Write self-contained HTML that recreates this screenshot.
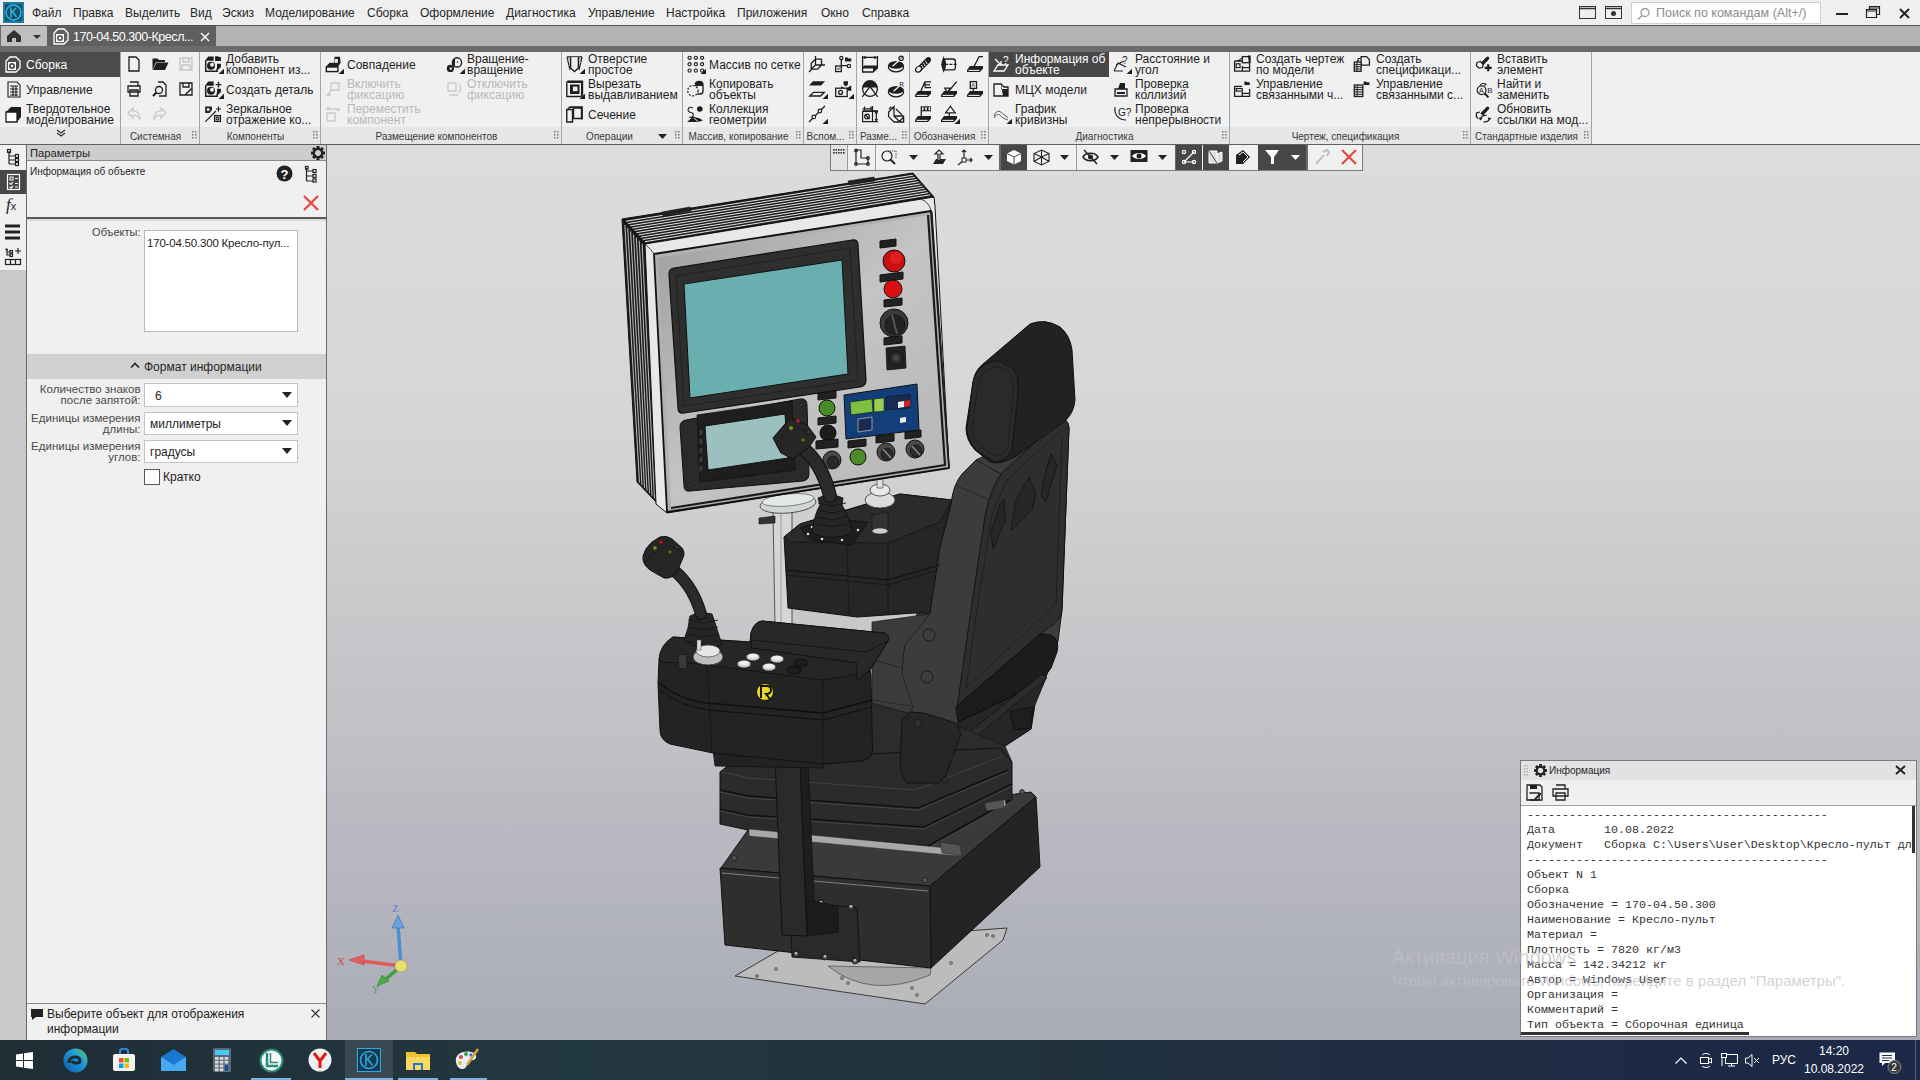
<!DOCTYPE html>
<html><head><meta charset="utf-8"><style>
*{margin:0;padding:0;box-sizing:border-box}
html,body{width:1920px;height:1080px;overflow:hidden;background:#f0f0f0;font-family:"Liberation Sans",sans-serif;color:#1e1e1e}
.a{position:absolute}
.t{position:absolute;white-space:nowrap;font-size:12px;line-height:11px;color:#1e1e1e}
.t2{position:absolute;white-space:nowrap;font-size:12px;line-height:11px;color:#1e1e1e}
.w{color:#fff}
.m{position:absolute;white-space:nowrap;font-size:12px;line-height:14px;top:6px;color:#262626}
.rl{position:absolute;white-space:nowrap;font-size:10px;line-height:12px;color:#3a3a3a;top:131px}
.dis{color:#b9b9b9}
svg{position:absolute;overflow:visible}
.mono{position:absolute;white-space:pre;font-family:"Liberation Mono",monospace;font-size:11.67px;line-height:15px;color:#333}
</style></head><body>
<div class="a" style="left:0;top:0;width:1920px;height:25px;background:#efefef"></div>
<svg width="21" height="21" style="left:3px;top:2px"><rect width="21" height="21" fill="#14506a"/><rect x="1" y="1" width="19" height="19" fill="none" stroke="#2aa6d6" stroke-width="1"/><circle cx="10.5" cy="10.5" r="7.5" fill="none" stroke="#2fb8e8" stroke-width="1.4"/><path d="M8 5.5 V15.5 M8 11 L13 6 M9.5 9.5 L13.5 15" fill="none" stroke="#2fb8e8" stroke-width="1.4"/></svg>
<div class="m" style="left:32px">Файл</div>
<div class="m" style="left:73px">Правка</div>
<div class="m" style="left:125px">Выделить</div>
<div class="m" style="left:190px">Вид</div>
<div class="m" style="left:222px">Эскиз</div>
<div class="m" style="left:265px">Моделирование</div>
<div class="m" style="left:367px">Сборка</div>
<div class="m" style="left:420px">Оформление</div>
<div class="m" style="left:506px">Диагностика</div>
<div class="m" style="left:588px">Управление</div>
<div class="m" style="left:666px">Настройка</div>
<div class="m" style="left:737px">Приложения</div>
<div class="m" style="left:821px">Окно</div>
<div class="m" style="left:862px">Справка</div>
<svg width="17" height="13" style="left:1579px;top:6px"><rect x="0.5" y="0.5" width="16" height="12" fill="none" stroke="#333"/><path d="M0.5 2.5 H16.5" stroke="#333" stroke-width="1.5"/></svg>
<svg width="17" height="13" style="left:1605px;top:6px"><rect x="0.5" y="0.5" width="16" height="12" fill="none" stroke="#333"/><path d="M0.5 2.5 H16.5" stroke="#333" stroke-width="1.5"/><circle cx="8.5" cy="7.5" r="2.5" fill="#333"/></svg>
<div class="a" style="left:1631px;top:2px;width:190px;height:22px;background:#fff;border:1px solid #cfcfcf"></div>
<svg width="14" height="14" style="left:1637px;top:7px"><circle cx="8" cy="5.5" r="4" fill="none" stroke="#999" stroke-width="1.3"/><path d="M5 8.5 L1 12.5" stroke="#999" stroke-width="1.5"/></svg>
<div class="m" style="left:1656px;color:#8c8c8c;font-size:12.5px">Поиск по командам (Alt+/)</div>
<div class="a" style="left:1836px;top:13px;width:12px;height:2px;background:#222"></div>
<svg width="15" height="13" style="left:1866px;top:6px"><path d="M3.5 3.5 V0.5 H13.5 V8.5 H10.5 M0.5 3.5 H10.5 V11.5 H0.5 Z M0.5 5 H10.5 M3.5 2 H13.5" fill="none" stroke="#222" stroke-width="1.2"/></svg>
<svg width="11" height="11" style="left:1899px;top:8px"><path d="M1 1 L10 10 M10 1 L1 10" stroke="#222" stroke-width="2"/></svg>
<div class="a" style="left:0;top:25px;width:1920px;height:27px;background:#6b6b6b;border-top:1px solid #525252"></div>
<div class="a" style="left:1px;top:26px;width:46px;height:20px;background:#bfbfbf"></div>
<svg width="14" height="12" style="left:7px;top:30px"><path d="M0 6 L7 0 L14 6 V12 H9 V8 H5 V12 H0 Z" fill="#333"/></svg>
<svg width="8" height="4" style="left:33px;top:35px"><path d="M0 0 H8 L4 4Z" fill="#333"/></svg>
<div class="a" style="left:47px;top:26px;width:169px;height:20px;background:#5f5f5f"></div>
<svg width="17" height="17" style="left:52px;top:28px"><path d="M2 5 L6 1 H12 L16 5 V12 L12 16 H2 Z" fill="none" stroke="#fff" stroke-width="1.3"/><rect x="4" y="6" width="8" height="8" fill="#fff"/><circle cx="8" cy="10" r="3" fill="#5f5f5f"/><circle cx="8" cy="10" r="1.2" fill="#fff"/></svg>
<div class="t" style="left:73px;top:31px;font-size:12.5px;line-height:13px;color:#fff;letter-spacing:-0.45px">170-04.50.300-Кресл...</div>
<svg width="10" height="10" style="left:200px;top:32px"><path d="M1 1 L9 9 M9 1 L1 9" stroke="#fff" stroke-width="1.4"/></svg>
<div class="a" style="left:216px;top:26px;width:1704px;height:20px;background:#b3b3b3"></div>
<div class="a" style="left:0;top:52px;width:1591px;height:92px;background:#f0f0f0"></div>
<div class="a" style="left:0;top:127px;width:1591px;height:17px;background:#e6e6e6"></div>
<div class="a" style="left:0;top:52px;width:120px;height:25px;background:#4b4b4b"></div>
<div class="a" style="left:989px;top:52px;width:120px;height:25px;background:#474747"></div>
<div class="a" style="left:120px;top:52px;width:1px;height:92px;background:#a4a4a4"></div>
<div class="a" style="left:199px;top:52px;width:1px;height:92px;background:#a4a4a4"></div>
<div class="a" style="left:320px;top:52px;width:1px;height:92px;background:#a4a4a4"></div>
<div class="a" style="left:561px;top:52px;width:1px;height:92px;background:#a4a4a4"></div>
<div class="a" style="left:682px;top:52px;width:1px;height:92px;background:#a4a4a4"></div>
<div class="a" style="left:803px;top:52px;width:1px;height:92px;background:#a4a4a4"></div>
<div class="a" style="left:856px;top:52px;width:1px;height:92px;background:#a4a4a4"></div>
<div class="a" style="left:909px;top:52px;width:1px;height:92px;background:#a4a4a4"></div>
<div class="a" style="left:988px;top:52px;width:1px;height:92px;background:#a4a4a4"></div>
<div class="a" style="left:1229px;top:52px;width:1px;height:92px;background:#a4a4a4"></div>
<div class="a" style="left:1470px;top:52px;width:1px;height:92px;background:#a4a4a4"></div>
<div class="a" style="left:1591px;top:52px;width:1px;height:92px;background:#a4a4a4"></div>
<div class="a" style="left:0;top:144px;width:1920px;height:1px;background:#5f5f5f"></div>
<div class="t w" style="left:26px;top:59.5px">Сборка</div>
<div class="t " style="left:26px;top:84.5px">Управление</div>
<div class="t2 " style="left:26px;top:103.7px">Твердотельное<br>моделирование</div>
<svg width="10" height="8" style="left:56px;top:129px"><path d="M1 1 L5 4 L9 1 M1 4 L5 7 L9 4" fill="none" stroke="#333" stroke-width="1.2"/></svg>
<svg width="17" height="17" style="left:4px;top:56px"><path d="M2 5 L6 1 H12 L16 5 V12 L12 16 H2 Z" fill="none" stroke="#fff" stroke-width="1.3"/><rect x="4" y="6" width="8" height="8" fill="#fff"/><circle cx="8" cy="10" r="3" fill="#4b4b4b"/><circle cx="8" cy="10" r="1.2" fill="#fff"/></svg>
<svg width="17" height="17" style="left:6px;top:81px"><path d="M2 1 H11 L14 4 V16 H2 Z M4 5 H12 M4 8 H12 M4 11 H12 M4 14 H12 M7 5 V15 M10 5 V15" fill="none" stroke="#1e1e1e" stroke-width="1.1"/></svg>
<svg width="17" height="17" style="left:5px;top:106px"><path d="M1 6 H12 V16 H1 Z" fill="#fff" stroke="#1e1e1e" stroke-width="1.3"/><path d="M1 6 L6 1 H16 V11 L12 16 V6 Z" fill="#1e1e1e"/></svg>
<svg class="ic" width="17" height="17" viewBox="0 0 17 17" style="left:126px;top:56px"><path d="M3 1 H10 L13 4 V15 H3 Z" fill="none" stroke="#1e1e1e" stroke-width="1.3"/></svg>
<svg class="ic" width="17" height="17" viewBox="0 0 17 17" style="left:152px;top:56px"><path d="M0.5 2.5 H5.5 L7 4 H13 V6 H4 L0.5 14 Z" fill="#1e1e1e"/><path d="M4.5 6.5 H16.5 L13 14 H0.8 Z" fill="#1e1e1e"/></svg>
<svg class="ic" width="17" height="17" viewBox="0 0 17 17" style="left:178px;top:56px"><path d="M2 2 H14 V14 H2 Z M5 2 V6 H11 V2 M4 9 H12 V14 H4 Z" fill="none" stroke="#c4c4c4" stroke-width="1.3"/></svg>
<svg class="ic" width="17" height="17" viewBox="0 0 17 17" style="left:126px;top:81px"><path d="M4 1 H12 V5 M2 5 H14 V11 H2 Z M4 9 H12 V15 H4 Z" fill="none" stroke="#1e1e1e" stroke-width="1.3"/></svg>
<svg class="ic" width="17" height="17" viewBox="0 0 17 17" style="left:152px;top:81px"><path d="M6 1 H11 L14 4 V15 H7" fill="none" stroke="#1e1e1e" stroke-width="1.3"/><circle cx="7" cy="9" r="3.5" fill="none" stroke="#1e1e1e" stroke-width="1.3"/><path d="M4.5 11.5 L1 15" stroke="#1e1e1e" stroke-width="2"/></svg>
<svg class="ic" width="17" height="17" viewBox="0 0 17 17" style="left:178px;top:81px"><path d="M2 2 H14 V14 H2 Z M5 2 V6 H11 V2" fill="none" stroke="#1e1e1e" stroke-width="1.3"/><path d="M7 13 L13 7 L14 8 L8 14 Z" fill="#1e1e1e"/></svg>
<svg class="ic" width="17" height="17" viewBox="0 0 17 17" style="left:126px;top:106px"><path d="M2 7 L7 2 V5 C12 5 14 8 14 13 C12 10 10 9 7 9 V12 Z" fill="none" stroke="#c4c4c4" stroke-width="1.2"/></svg>
<svg class="ic" width="17" height="17" viewBox="0 0 17 17" style="left:152px;top:106px"><path d="M14 7 L9 2 V5 C4 5 2 8 2 13 C4 10 6 9 9 9 V12 Z" fill="none" stroke="#c4c4c4" stroke-width="1.2"/></svg>
<svg class="ic" width="17" height="17" viewBox="0 0 17 17" style="left:205px;top:56px"><path d="M0.7 4.5 V15.2 H12.1 V12.5" fill="none" stroke="#1e1e1e" stroke-width="1.5"/><path d="M0 4.8 L3.2 0.5 H8.7 V4.8 Z M10.1 0.2 H13 L13.8 1 H15.9 V4.9 H10.1 Z M12 7.8 H15.9 V11 L13.5 13.5 H12 Z" fill="#1e1e1e"/><circle cx="6" cy="9.8" r="4" fill="#1e1e1e"/><circle cx="7" cy="8.8" r="2" fill="#f0f0f0"/><path d="M13.5 18 L19 18 L19 12.8 Z" fill="#1e1e1e"/></svg>
<div class="t2 " style="left:226px;top:53.7px">Добавить<br>компонент из...</div>
<svg class="ic" width="17" height="17" viewBox="0 0 17 17" style="left:205px;top:81px"><path d="M0.7 4.5 V15.2 H12.1 V12.5" fill="none" stroke="#1e1e1e" stroke-width="1.5"/><path d="M0 4.8 L3.2 0.5 H8.7 V4.8 Z M12 7.8 H15.9 V11 L13.5 13.5 H12 Z" fill="#1e1e1e"/><path d="M13.5 0.8 V6.6 M10.6 3.7 H16.4" stroke="#1e1e1e" stroke-width="1.3"/><circle cx="6" cy="9.8" r="4" fill="#1e1e1e"/><circle cx="7" cy="8.8" r="2" fill="#f0f0f0"/><path d="M13.5 18 L19 18 L19 12.8 Z" fill="#1e1e1e"/></svg>
<div class="t " style="left:226px;top:84.5px">Создать деталь</div>
<svg class="ic" width="17" height="17" viewBox="0 0 17 17" style="left:205px;top:106px"><path d="M0.2 0.5 H6.9 V4 L4.5 7 H0.2 Z" fill="#1e1e1e"/><circle cx="3.2" cy="3.6" r="1.5" fill="#f0f0f0"/><path d="M0.2 15.8 L11 5" stroke="#1e1e1e" stroke-width="1.1"/><path d="M13.5 0.5 V5.5 M11 3 H16" stroke="#1e1e1e" stroke-width="1.2"/><rect x="9.6" y="9.6" width="5.8" height="5.8" fill="#f0f0f0" stroke="#1e1e1e" stroke-width="1.3"/><circle cx="12.5" cy="12.5" r="1.4" fill="none" stroke="#1e1e1e" stroke-width="1.1"/></svg>
<div class="t2 " style="left:226px;top:103.7px">Зеркальное<br>отражение ко...</div>
<svg class="ic" width="17" height="17" viewBox="0 0 17 17" style="left:325px;top:56px"><rect x="1.3" y="11" width="11.6" height="4.6" fill="#f0f0f0" stroke="#1e1e1e" stroke-width="1.4"/><path d="M0.6 11 L4.5 6.8 H9.5 V0.8 H15 L15.6 6.8 L12.9 11 Z" fill="#1e1e1e"/><rect x="10" y="3" width="2.9" height="3.8" fill="#f0f0f0"/><path d="M13.5 18 L19 18 L19 12.8 Z" fill="#1e1e1e"/></svg>
<div class="t " style="left:347px;top:59.5px">Совпадение</div>
<svg class="ic" width="17" height="17" viewBox="0 0 17 17" style="left:325px;top:81px"><path d="M6 2 H14 V9 H6 Z M6 9 L3 14 M1 14 H6" fill="none" stroke="#c8c8c8" stroke-width="1.3"/></svg>
<div class="t2 dis" style="left:347px;top:78.7px">Включить<br>фиксацию</div>
<svg class="ic" width="17" height="17" viewBox="0 0 17 17" style="left:325px;top:106px"><path d="M1 3 H15 M1 3 L4 1 M15 3 L12 5 M2 7 H10 V15 H2 Z" fill="none" stroke="#c8c8c8" stroke-width="1.3"/></svg>
<div class="t2 dis" style="left:347px;top:103.7px">Переместить<br>компонент</div>
<svg class="ic" width="17" height="17" viewBox="0 0 17 17" style="left:446px;top:56px"><circle cx="11" cy="6.4" r="4.6" fill="#f0f0f0" stroke="#1e1e1e" stroke-width="1.4"/><path d="M6.4 6.4 A4.6 4.6 0 0 1 9 2.2 L9 10.6 A4.6 4.6 0 0 1 6.4 6.4 Z" fill="#1e1e1e"/><circle cx="11.5" cy="6" r="0.8" fill="#1e1e1e"/><circle cx="4.4" cy="12.4" r="3.6" fill="#1e1e1e"/><circle cx="4.8" cy="12.6" r="1.2" fill="#f0f0f0"/><path d="M13.5 18 L19 18 L19 12.8 Z" fill="#1e1e1e"/></svg>
<div class="t2 " style="left:467px;top:53.7px">Вращение-<br>вращение</div>
<svg class="ic" width="17" height="17" viewBox="0 0 17 17" style="left:446px;top:81px"><path d="M2 2 H10 V10 H2 Z M13 3 C15 6 15 9 13 12 M3 14 H12" fill="none" stroke="#c8c8c8" stroke-width="1.3"/></svg>
<div class="t2 dis" style="left:467px;top:78.7px">Отключить<br>фиксацию</div>
<svg class="ic" width="17" height="17" viewBox="0 0 17 17" style="left:566px;top:56px"><path d="M1 0.8 H16 M1 0.8 L4 14 M16 0.8 L13 14" stroke="#1e1e1e" stroke-width="1.2"/><path d="M1.5 2 L3.5 4 M1.5 5 L3.8 7.3 M2 8.5 L4.2 10.7 M2.7 11.8 L4.5 13.6 M13 2 L15.5 4.5 M13 5 L15 7 M12.8 8.3 L14.5 10 M12.5 11.5 L13.8 12.8" stroke="#888" stroke-width="1"/><path d="M4.6 1.2 V12 L8.5 15.5 L12.4 12 V1.2" fill="#f0f0f0" stroke="#1e1e1e" stroke-width="1.4"/><path d="M13.5 18 L19 18 L19 12.8 Z" fill="#1e1e1e"/></svg>
<div class="t2 " style="left:588px;top:53.7px">Отверстие<br>простое</div>
<svg class="ic" width="17" height="17" viewBox="0 0 17 17" style="left:566px;top:81px"><path d="M0.8 15.5 V1 L2 0.2 H16.5 V14 L15 15.5 Z" fill="#f0f0f0" stroke="#1e1e1e" stroke-width="1.4"/><path d="M2 0.2 H16.5 V14 L15 15.5 V2 H2 Z" fill="#1e1e1e"/><rect x="4" y="3.5" width="9.5" height="9.5" fill="#1e1e1e"/><rect x="6.9" y="5.6" width="4.6" height="4.6" fill="#f0f0f0"/><path d="M13.5 18 L19 18 L19 12.8 Z" fill="#1e1e1e"/></svg>
<div class="t2 " style="left:588px;top:78.7px">Вырезать<br>выдавливанием</div>
<svg class="ic" width="17" height="17" viewBox="0 0 17 17" style="left:566px;top:106px"><path d="M0.8 3.5 V16 H6.5 V3.5 Z" fill="#f0f0f0" stroke="#1e1e1e" stroke-width="1.4"/><path d="M7.5 2 H15.5 V12.5 H7.5 Z" fill="#f0f0f0" stroke="#1e1e1e" stroke-width="1.4"/><path d="M0.8 3.5 L3.5 0.3 H16.9 V13 L15.5 14 V2 H4 L2.5 3.5 Z" fill="#1e1e1e"/></svg>
<div class="t " style="left:588px;top:109.5px">Сечение</div>
<svg class="ic" width="17" height="17" viewBox="0 0 17 17" style="left:687px;top:56px"><circle cx="2.6" cy="1.8" r="1.6" fill="none" stroke="#1e1e1e" stroke-width="1.1"/><circle cx="2.6" cy="8.200000000000001" r="1.6" fill="none" stroke="#1e1e1e" stroke-width="1.1"/><circle cx="2.6" cy="14.600000000000001" r="1.6" fill="none" stroke="#1e1e1e" stroke-width="1.1"/><circle cx="8.85" cy="1.8" r="1.6" fill="none" stroke="#1e1e1e" stroke-width="1.1"/><circle cx="8.85" cy="8.200000000000001" r="1.6" fill="none" stroke="#1e1e1e" stroke-width="1.1"/><circle cx="8.85" cy="14.600000000000001" r="1.6" fill="none" stroke="#1e1e1e" stroke-width="1.1"/><circle cx="15.1" cy="1.8" r="1.6" fill="none" stroke="#1e1e1e" stroke-width="1.1"/><circle cx="15.1" cy="8.200000000000001" r="1.6" fill="none" stroke="#1e1e1e" stroke-width="1.1"/><circle cx="15.1" cy="14.600000000000001" r="1.6" fill="none" stroke="#1e1e1e" stroke-width="1.1"/><path d="M13.5 18 L19 18 L19 12.8 Z" fill="#1e1e1e"/></svg>
<div class="t " style="left:709px;top:59.5px">Массив по сетке</div>
<svg class="ic" width="17" height="17" viewBox="0 0 17 17" style="left:687px;top:81px"><circle cx="5.9" cy="9.7" r="5.2" fill="none" stroke="#1e1e1e" stroke-width="1.2" stroke-dasharray="2 1.4"/><path d="M8 3 Q9 0.3 12 0.3 Q16 0.3 16 3.5 V10 Q16 13 13 13 H10.5" fill="none" stroke="#1e1e1e" stroke-width="1.3"/><path d="M8 3 Q9 0.3 12 0.3 Q16 0.3 16 3.5 V5 H8 Z" fill="#1e1e1e"/></svg>
<div class="t2 " style="left:709px;top:78.7px">Копировать<br>объекты</div>
<svg class="ic" width="17" height="17" viewBox="0 0 17 17" style="left:687px;top:106px"><path d="M6 2 Q2 0 1.2 3 Q0.5 6 4 6.5 Q7 7 6 10 Q5 12 2 11" fill="none" stroke="#1e1e1e" stroke-width="1.1"/><circle cx="12.8" cy="3" r="2.8" fill="#1e1e1e"/><path d="M0.2 16 L6 10.5 L13 12.5 L16 14.5 L11 16 Z" fill="#1e1e1e"/><path d="M7 12 L11 15.5" stroke="#f0f0f0" stroke-width="1"/></svg>
<div class="t2 " style="left:709px;top:103.7px">Коллекция<br>геометрии</div>
<svg class="ic" width="17" height="17" viewBox="0 0 17 17" style="left:809px;top:56px"><path d="M6.5 0 V9 H16 M6.5 3.2 H12.5 V9 L8.7 13.1 H2.2 V7.3 L6.5 3.2 M2.2 13.1 L6.5 9 M0 16 L2.5 13.5" fill="none" stroke="#1e1e1e" stroke-width="1.3"/></svg>
<svg class="ic" width="17" height="17" viewBox="0 0 17 17" style="left:835px;top:56px"><path d="M6.3 3.5 V9.7 H12" fill="none" stroke="#1e1e1e" stroke-width="1.3"/><circle cx="6.3" cy="2" r="1.6" fill="#f0f0f0" stroke="#1e1e1e" stroke-width="1.2"/><circle cx="13.9" cy="10" r="1.7" fill="#f0f0f0" stroke="#1e1e1e" stroke-width="1.2"/><path d="M10 1.5 H12.5 L13.5 2.5 H16.3 V5.6 H10 Z" fill="#1e1e1e"/><rect x="0.7" y="10" width="5.6" height="5.6" fill="#f0f0f0" stroke="#1e1e1e" stroke-width="1.3"/><path d="M2.3 12.5 L3.3 13.8 L5 11.5" fill="none" stroke="#1e1e1e" stroke-width="1"/></svg>
<svg class="ic" width="17" height="17" viewBox="0 0 17 17" style="left:809px;top:81px"><path d="M0 4.6 L4 0.2 H16 L12 4.6 Z" fill="#1e1e1e"/><path d="M0.8 15 L4.5 11.3 H15.3 L11.6 15 Z" fill="none" stroke="#1e1e1e" stroke-width="1.3"/><path d="M13.5 18 L19 18 L19 12.8 Z" fill="#1e1e1e"/></svg>
<svg class="ic" width="17" height="17" viewBox="0 0 17 17" style="left:835px;top:81px"><rect x="0.7" y="7.2" width="11.5" height="8.3" fill="#f0f0f0" stroke="#1e1e1e" stroke-width="1.3"/><ellipse cx="5.6" cy="11.4" rx="1.9" ry="2" fill="none" stroke="#1e1e1e" stroke-width="1.3"/><path d="M8.5 0.3 H13 V3.5 L10.8 5.5 L8.5 3.5 Z M6 5.2 L10.8 7.8 L15.5 4.8 H16.3 V9.7 H12.3 V7 H6 Z" fill="#1e1e1e"/><path d="M13.5 18 L19 18 L19 12.8 Z" fill="#1e1e1e"/></svg>
<svg class="ic" width="17" height="17" viewBox="0 0 17 17" style="left:809px;top:106px"><path d="M0 16 L16 0" stroke="#1e1e1e" stroke-width="1.2"/><circle cx="4.8" cy="10.9" r="1.8" fill="#f0f0f0" stroke="#1e1e1e" stroke-width="1.2"/><circle cx="10.9" cy="5" r="1.8" fill="#f0f0f0" stroke="#1e1e1e" stroke-width="1.2"/><path d="M13.5 18 L19 18 L19 12.8 Z" fill="#1e1e1e"/></svg>
<svg class="ic" width="17" height="17" viewBox="0 0 17 17" style="left:862px;top:56px"><path d="M0.6 0 V16 H11 L15.4 12 V0 M0.6 1.4 H15.4 M3 0 V3 M12.8 0 V3" fill="none" stroke="#1e1e1e" stroke-width="1.3"/><path d="M2.5 9.5 H15.4 V12.2 L11 16 V12.6 H0.6 V11 Z" fill="#1e1e1e"/></svg>
<svg class="ic" width="17" height="17" viewBox="0 0 17 17" style="left:888px;top:56px"><ellipse cx="8" cy="11" rx="7.6" ry="4.8" fill="#f0f0f0" stroke="#1e1e1e" stroke-width="1.3"/><ellipse cx="8" cy="9" rx="7.6" ry="3.8" fill="#1e1e1e"/><path d="M4.5 10.3 L12.4 3.3" stroke="#f0f0f0" stroke-width="1.3"/><circle cx="13.1" cy="2.3" r="2.2" fill="#f0f0f0" stroke="#1e1e1e" stroke-width="1.2"/><path d="M12 3.4 L14.2 1.2" stroke="#1e1e1e" stroke-width="0.9"/></svg>
<svg class="ic" width="17" height="17" viewBox="0 0 17 17" style="left:862px;top:81px"><circle cx="8" cy="8" r="7.4" fill="none" stroke="#1e1e1e" stroke-width="1.3"/><path d="M0.6 6.5 A7.4 7.4 0 0 1 15.4 6.5 Z" fill="#1e1e1e"/><path d="M0.3 15.8 L8 5.5 L15.7 15.8" fill="none" stroke="#1e1e1e" stroke-width="1.3"/></svg>
<svg class="ic" width="17" height="17" viewBox="0 0 17 17" style="left:888px;top:81px"><ellipse cx="8" cy="11" rx="7.6" ry="4.8" fill="#f0f0f0" stroke="#1e1e1e" stroke-width="1.3"/><ellipse cx="8" cy="9" rx="7.6" ry="3.8" fill="#1e1e1e"/><path d="M5.5 10.3 L12 4.5" stroke="#f0f0f0" stroke-width="1.3"/><text x="11.2" y="5.6" font-size="6.5" fill="#1e1e1e" font-family="Liberation Sans">R</text></svg>
<svg class="ic" width="17" height="17" viewBox="0 0 17 17" style="left:862px;top:106px"><path d="M0.6 2.8 H10.5 M2.5 0.5 V4 M9 0.5 V4 M0.6 5 V15.6 H16 M10.5 0 V15.6 M14.3 6 V14.5 M13 7.2 L14.3 6 L15.6 7.2 M13 13.3 L14.3 14.5 L15.6 13.3" fill="none" stroke="#1e1e1e" stroke-width="1.2"/><rect x="0.6" y="4.2" width="15.4" height="1.8" fill="#1e1e1e"/><circle cx="5" cy="10.5" r="2.4" fill="none" stroke="#1e1e1e" stroke-width="1.2"/><path d="M3 8.5 L7.5 13" stroke="#1e1e1e" stroke-width="1.2"/></svg>
<svg class="ic" width="17" height="17" viewBox="0 0 17 17" style="left:888px;top:106px"><path d="M0.6 6 L6 0.6 V10 L11.5 15.5 L15.6 11 V16 H6 L0.6 10.6 Z M6 10 L15.6 10" fill="none" stroke="#1e1e1e" stroke-width="1.3"/><path d="M1 3 L3.5 0.8 M8 3 L14 9" stroke="#1e1e1e" stroke-width="1.2"/></svg>
<svg class="ic" width="17" height="17" viewBox="0 0 17 17" style="left:915px;top:56px"><path d="M1.5 12 L11 2.3 Q13.5 0 15.5 2 Q17 4 14.5 6.8 L5 16 Z" fill="#1e1e1e"/><ellipse cx="3.6" cy="13.2" rx="3.3" ry="2.6" transform="rotate(-45 3.6 13.2)" fill="#f0f0f0" stroke="#1e1e1e" stroke-width="1.2"/><path d="M6 9 Q8 10 8 12 M8 7 Q10 8 10 10 M10 5 Q12 6 12 8" fill="none" stroke="#f0f0f0" stroke-width="1"/></svg>
<svg class="ic" width="17" height="17" viewBox="0 0 17 17" style="left:941px;top:56px"><rect x="2.7" y="3" width="11.7" height="10.9" rx="2.5" fill="#f0f0f0" stroke="#1e1e1e" stroke-width="1.3"/><path d="M2.7 3.5 Q0.8 8.4 2.7 13.4 Q5 8.4 2.7 3.5 Z" fill="#1e1e1e" stroke="#1e1e1e" stroke-width="2.5"/><path d="M0 8.4 H16" stroke="#1e1e1e" stroke-width="1.2" stroke-dasharray="3 1.2"/></svg>
<svg class="ic" width="17" height="17" viewBox="0 0 17 17" style="left:967px;top:56px"><path d="M3 10 H16 V12.5 L13 16 H0 V14 Z" fill="#1e1e1e"/><path d="M1.5 14.4 H12.5" stroke="#f0f0f0" stroke-width="1.1"/><path d="M6 12.4 L12.1 0.6 H16" fill="none" stroke="#1e1e1e" stroke-width="1.2"/></svg>
<svg class="ic" width="17" height="17" viewBox="0 0 17 17" style="left:915px;top:81px"><path d="M3 10 H16 V12.5 L13 16 H0 V14 Z" fill="#1e1e1e"/><path d="M1.5 14.4 H12.5" stroke="#f0f0f0" stroke-width="1.1"/><path d="M5 12.4 L9.8 0.8 M10 0.8 H16 M10 3.8 H15 M10 6.6 H16 M10 0.8 V6.6" fill="none" stroke="#1e1e1e" stroke-width="1.3"/></svg>
<svg class="ic" width="17" height="17" viewBox="0 0 17 17" style="left:941px;top:81px"><path d="M3 10 H16 V12.5 L13 16 H0 V14 Z" fill="#1e1e1e"/><path d="M1.5 14.4 H12.5" stroke="#f0f0f0" stroke-width="1.1"/><path d="M3.8 7.2 H9.2 L6.5 11.5 Z M6.5 11.5 L15.8 0.6" fill="none" stroke="#1e1e1e" stroke-width="1.3"/></svg>
<svg class="ic" width="17" height="17" viewBox="0 0 17 17" style="left:967px;top:81px"><path d="M3 10 H16 V12.5 L13 16 H0 V14 Z" fill="#1e1e1e"/><path d="M1.5 14.4 H12.5" stroke="#f0f0f0" stroke-width="1.1"/><rect x="3.3" y="0.6" width="6.2" height="6.8" fill="#f0f0f0" stroke="#1e1e1e" stroke-width="1.3"/><path d="M6.3 7.4 V11" stroke="#1e1e1e" stroke-width="1.2"/><text x="4.3" y="6" font-size="5.5" fill="#1e1e1e" font-family="Liberation Sans">A</text></svg>
<svg class="ic" width="17" height="17" viewBox="0 0 17 17" style="left:915px;top:106px"><path d="M3 10 H16 V12.5 L13 16 H0 V14 Z" fill="#1e1e1e"/><path d="M1.5 14.4 H12.5" stroke="#f0f0f0" stroke-width="1.1"/><path d="M6.3 0.2 V11" stroke="#1e1e1e" stroke-width="1.3"/><rect x="6.3" y="0.3" width="9.6" height="5" fill="#1e1e1e"/><path d="M7.8 1.3 V4.3 M11 1.3 V4.3 M14.3 1.3 V4.3" stroke="#f0f0f0" stroke-width="1.6"/></svg>
<svg class="ic" width="17" height="17" viewBox="0 0 17 17" style="left:941px;top:106px"><path d="M3 10 H16 V12.5 L13 16 H0 V14 Z" fill="#1e1e1e"/><path d="M1.5 14.4 H12.5" stroke="#f0f0f0" stroke-width="1.1"/><path d="M4.6 6.9 L9.4 0.2 L14.2 6.9 Z M4 6.9 H14.8 M8.5 6.9 L8 11" fill="none" stroke="#1e1e1e" stroke-width="1.2"/><path d="M13.5 18 L19 18 L19 12.8 Z" fill="#1e1e1e"/></svg>
<svg class="ic" width="17" height="17" viewBox="0 0 17 17" style="left:993px;top:56px"><path d="M1 15 H11 L15 9 H5 Z M2 3 L8 9 M8 9 V5 M8 9 H4" fill="none" stroke="#fff" stroke-width="1.3"/><text x="10" y="8" font-size="10" fill="#fff" font-family="Liberation Sans">?</text></svg>
<div class="t2 w" style="left:1015px;top:53.7px">Информация об<br>объекте</div>
<svg class="ic" width="17" height="17" viewBox="0 0 17 17" style="left:993px;top:81px"><path d="M1 3 H8 L11 6 H15 V15 H1 Z" fill="none" stroke="#1e1e1e" stroke-width="1.3"/><path d="M8 3 V8 H15 V15 H10" fill="#1e1e1e"/></svg>
<div class="t " style="left:1015px;top:84.5px">МЦХ модели</div>
<svg class="ic" width="17" height="17" viewBox="0 0 17 17" style="left:993px;top:106px"><path d="M1 10 C4 2 8 6 10 8 C12 10 14 10 15 12 M1 12 C4 6 7 9 9 11 C11 13 13 13 15 14" fill="none" stroke="#555" stroke-width="1"/><path d="M13.5 18 L19 18 L19 12.8 Z" fill="#1e1e1e"/></svg>
<div class="t2 " style="left:1015px;top:103.7px">График<br>кривизны</div>
<svg class="ic" width="17" height="17" viewBox="0 0 17 17" style="left:1113px;top:56px"><path d="M1 15 L5 7 L13 11 M1 15 H10 M3 9 L11 5" fill="none" stroke="#1e1e1e" stroke-width="1.1"/><text x="9" y="8" font-size="10" fill="#1e1e1e" font-family="Liberation Sans">?</text><path d="M13.5 18 L19 18 L19 12.8 Z" fill="#1e1e1e"/></svg>
<div class="t2 " style="left:1135px;top:53.7px">Расстояние и<br>угол</div>
<svg class="ic" width="17" height="17" viewBox="0 0 17 17" style="left:1113px;top:81px"><path d="M2 8 H14 V15 H2 Z" fill="none" stroke="#1e1e1e" stroke-width="1.3"/><path d="M5 8 L7 2 H12 V8" fill="#1e1e1e"/><path d="M4 11 H12 V13 H4Z" fill="#1e1e1e"/></svg>
<div class="t2 " style="left:1135px;top:78.7px">Проверка<br>коллизий</div>
<svg class="ic" width="17" height="17" viewBox="0 0 17 17" style="left:1113px;top:106px"><path d="M2 1 C1 8 5 14 13 14" fill="none" stroke="#1e1e1e" stroke-width="1.1"/><text x="5" y="10" font-size="10" fill="#1e1e1e" font-family="Liberation Sans">G?</text></svg>
<div class="t2 " style="left:1135px;top:103.7px">Проверка<br>непрерывности</div>
<svg class="ic" width="17" height="17" viewBox="0 0 17 17" style="left:1234px;top:56px"><path d="M0.6 5 H8.3 M15.6 6.7 V15.2 H0.6 V5 M8.3 10 V15.2 M8.3 11.7 H15.6" fill="none" stroke="#1e1e1e" stroke-width="1.3"/><rect x="2.2" y="7.8" width="3.8" height="3.8" fill="none" stroke="#1e1e1e" stroke-width="1.2"/><rect x="8.3" y="0.6" width="7.3" height="6.1" fill="#f0f0f0" stroke="#1e1e1e" stroke-width="1.3"/><path d="M14 0.6 H15.6 V6.7" stroke="#1e1e1e" stroke-width="2"/><path d="M8 2.5 Q5.5 2.5 5 5 M4 3.8 L5 5.3 L6.3 4" fill="none" stroke="#1e1e1e" stroke-width="1"/></svg>
<div class="t2 " style="left:1256px;top:53.7px">Создать чертеж<br>по модели</div>
<svg class="ic" width="17" height="17" viewBox="0 0 17 17" style="left:1234px;top:81px"><path d="M0.6 5.3 H8 M15.6 8 V15.4 H0.6 V5.3 M8.3 10.8 V15.4 M8.3 12.4 H15.6" fill="none" stroke="#1e1e1e" stroke-width="1.3"/><rect x="2.2" y="7.5" width="6" height="2.6" fill="none" stroke="#1e1e1e" stroke-width="1.2"/><path d="M10.4 0.4 H12.5 L13.3 1.2 H15.8 V4.1 H10.4 Z" fill="#1e1e1e"/></svg>
<div class="t2 " style="left:1256px;top:78.7px">Управление<br>связанными ч...</div>
<svg class="ic" width="17" height="17" viewBox="0 0 17 17" style="left:1354px;top:56px"><path d="M7.1 0.6 H12.5 L15.4 3.5 V9.2 H7.1 Z" fill="#f0f0f0" stroke="#1e1e1e" stroke-width="1.3"/><rect x="0.3" y="6" width="6.8" height="9.3" fill="#f0f0f0" stroke="#1e1e1e" stroke-width="1.3"/><path d="M0.3 8.4 H7 M0.3 10.7 H7 M0.3 13 H7 M3 6 V15.3" stroke="#1e1e1e" stroke-width="1"/><path d="M6.5 2.5 H4 V5 M3 4 L4 5.3 L5 4" fill="none" stroke="#1e1e1e" stroke-width="1"/></svg>
<div class="t2 " style="left:1376px;top:53.7px">Создать<br>спецификаци...</div>
<svg class="ic" width="17" height="17" viewBox="0 0 17 17" style="left:1354px;top:81px"><rect x="0.3" y="4" width="8.5" height="11.5" fill="#f0f0f0" stroke="#1e1e1e" stroke-width="1.3"/><path d="M0.3 6.3 H8.8 M0.3 8.6 H8.8 M0.3 10.9 H8.8 M0.3 13.2 H8.8 M3.2 4 V15.5" stroke="#1e1e1e" stroke-width="1"/><path d="M9.6 0.4 H11.8 L12.6 1.2 H15.4 V4.1 H9.6 Z" fill="#1e1e1e"/></svg>
<div class="t2 " style="left:1376px;top:78.7px">Управление<br>связанными с...</div>
<svg class="ic" width="17" height="17" viewBox="0 0 17 17" style="left:1475px;top:56px"><path d="M5.3 7.5 L11.5 1 Q13 0 14 1.2 Q14.8 2.5 13.5 3.8 L8 9.5 Z" fill="#1e1e1e"/><path d="M2 6.5 L5.5 5.5 L8.2 8.5 L7.5 11.5 L4 12 L1.3 9.5 Z" fill="#f0f0f0" stroke="#1e1e1e" stroke-width="1.2"/><path d="M13.2 8.3 V15.3 M9.7 11.8 H16.7" stroke="#1e1e1e" stroke-width="2.2"/></svg>
<div class="t2 " style="left:1497px;top:53.7px">Вставить<br>элемент</div>
<svg class="ic" width="17" height="17" viewBox="0 0 17 17" style="left:1475px;top:81px"><circle cx="6.6" cy="9.3" r="4.4" fill="none" stroke="#1e1e1e" stroke-width="1.2"/><path d="M9.7 12.5 L13.5 16.4" stroke="#1e1e1e" stroke-width="2"/><text x="4" y="11.8" font-size="7" fill="#1e1e1e" font-family="Liberation Sans">A</text><text x="12.3" y="12.3" font-size="8" fill="#1e1e1e" font-family="Liberation Sans">B</text><path d="M5 3.8 Q8 0.8 11 3.5 M10 2.2 L11.3 3.8 L9.4 4.2" fill="none" stroke="#1e1e1e" stroke-width="1"/></svg>
<div class="t2 " style="left:1497px;top:78.7px">Найти и<br>заменить</div>
<svg class="ic" width="17" height="17" viewBox="0 0 17 17" style="left:1475px;top:106px"><path d="M5.3 7.5 L11.5 1 Q13 0 14 1.2 Q14.8 2.5 13.5 3.8 L8 9.5 Z" fill="#1e1e1e"/><path d="M5 6 L1.5 7 L1.3 10.5 L3 12.5" fill="none" stroke="#1e1e1e" stroke-width="1.2"/><path d="M5.5 13 Q7 8.5 11.5 9.5 M14.5 13 Q13 16.5 8.5 15.8 M4.2 11.8 L5.5 13.5 L7 12 M15.8 12 L14.5 13.2 L13.2 11.6" fill="none" stroke="#1e1e1e" stroke-width="1.3"/></svg>
<div class="t2 " style="left:1497px;top:103.7px">Обновить<br>ссылки на мод...</div>
<div class="rl" style="left:120px;width:71px;text-align:center">Системная</div>
<svg width="5" height="9" style="left:192px;top:131px"><rect x="0" y="0" width="1.5" height="1.5" fill="#777"/><rect x="0" y="3" width="1.5" height="1.5" fill="#777"/><rect x="0" y="6" width="1.5" height="1.5" fill="#777"/><rect x="3" y="0" width="1.5" height="1.5" fill="#777"/><rect x="3" y="3" width="1.5" height="1.5" fill="#777"/><rect x="3" y="6" width="1.5" height="1.5" fill="#777"/></svg>
<div class="rl" style="left:199px;width:113px;text-align:center">Компоненты</div>
<svg width="5" height="9" style="left:313px;top:131px"><rect x="0" y="0" width="1.5" height="1.5" fill="#777"/><rect x="0" y="3" width="1.5" height="1.5" fill="#777"/><rect x="0" y="6" width="1.5" height="1.5" fill="#777"/><rect x="3" y="0" width="1.5" height="1.5" fill="#777"/><rect x="3" y="3" width="1.5" height="1.5" fill="#777"/><rect x="3" y="6" width="1.5" height="1.5" fill="#777"/></svg>
<div class="rl" style="left:320px;width:233px;text-align:center">Размещение компонентов</div>
<svg width="5" height="9" style="left:554px;top:131px"><rect x="0" y="0" width="1.5" height="1.5" fill="#777"/><rect x="0" y="3" width="1.5" height="1.5" fill="#777"/><rect x="0" y="6" width="1.5" height="1.5" fill="#777"/><rect x="3" y="0" width="1.5" height="1.5" fill="#777"/><rect x="3" y="3" width="1.5" height="1.5" fill="#777"/><rect x="3" y="6" width="1.5" height="1.5" fill="#777"/></svg>
<div class="rl" style="left:561px;width:97px;text-align:center">Операции</div>
<svg width="5" height="9" style="left:675px;top:131px"><rect x="0" y="0" width="1.5" height="1.5" fill="#777"/><rect x="0" y="3" width="1.5" height="1.5" fill="#777"/><rect x="0" y="6" width="1.5" height="1.5" fill="#777"/><rect x="3" y="0" width="1.5" height="1.5" fill="#777"/><rect x="3" y="3" width="1.5" height="1.5" fill="#777"/><rect x="3" y="6" width="1.5" height="1.5" fill="#777"/></svg>
<div class="rl" style="left:682px;width:113px;text-align:center">Массив, копирование</div>
<svg width="5" height="9" style="left:796px;top:131px"><rect x="0" y="0" width="1.5" height="1.5" fill="#777"/><rect x="0" y="3" width="1.5" height="1.5" fill="#777"/><rect x="0" y="6" width="1.5" height="1.5" fill="#777"/><rect x="3" y="0" width="1.5" height="1.5" fill="#777"/><rect x="3" y="3" width="1.5" height="1.5" fill="#777"/><rect x="3" y="6" width="1.5" height="1.5" fill="#777"/></svg>
<div class="rl" style="left:803px;width:45px;text-align:center">Вспом...</div>
<svg width="5" height="9" style="left:849px;top:131px"><rect x="0" y="0" width="1.5" height="1.5" fill="#777"/><rect x="0" y="3" width="1.5" height="1.5" fill="#777"/><rect x="0" y="6" width="1.5" height="1.5" fill="#777"/><rect x="3" y="0" width="1.5" height="1.5" fill="#777"/><rect x="3" y="3" width="1.5" height="1.5" fill="#777"/><rect x="3" y="6" width="1.5" height="1.5" fill="#777"/></svg>
<div class="rl" style="left:856px;width:45px;text-align:center">Разме...</div>
<svg width="5" height="9" style="left:902px;top:131px"><rect x="0" y="0" width="1.5" height="1.5" fill="#777"/><rect x="0" y="3" width="1.5" height="1.5" fill="#777"/><rect x="0" y="6" width="1.5" height="1.5" fill="#777"/><rect x="3" y="0" width="1.5" height="1.5" fill="#777"/><rect x="3" y="3" width="1.5" height="1.5" fill="#777"/><rect x="3" y="6" width="1.5" height="1.5" fill="#777"/></svg>
<div class="rl" style="left:909px;width:71px;text-align:center">Обозначения</div>
<svg width="5" height="9" style="left:981px;top:131px"><rect x="0" y="0" width="1.5" height="1.5" fill="#777"/><rect x="0" y="3" width="1.5" height="1.5" fill="#777"/><rect x="0" y="6" width="1.5" height="1.5" fill="#777"/><rect x="3" y="0" width="1.5" height="1.5" fill="#777"/><rect x="3" y="3" width="1.5" height="1.5" fill="#777"/><rect x="3" y="6" width="1.5" height="1.5" fill="#777"/></svg>
<div class="rl" style="left:988px;width:233px;text-align:center">Диагностика</div>
<svg width="5" height="9" style="left:1222px;top:131px"><rect x="0" y="0" width="1.5" height="1.5" fill="#777"/><rect x="0" y="3" width="1.5" height="1.5" fill="#777"/><rect x="0" y="6" width="1.5" height="1.5" fill="#777"/><rect x="3" y="0" width="1.5" height="1.5" fill="#777"/><rect x="3" y="3" width="1.5" height="1.5" fill="#777"/><rect x="3" y="6" width="1.5" height="1.5" fill="#777"/></svg>
<div class="rl" style="left:1229px;width:233px;text-align:center">Чертеж, спецификация</div>
<svg width="5" height="9" style="left:1463px;top:131px"><rect x="0" y="0" width="1.5" height="1.5" fill="#777"/><rect x="0" y="3" width="1.5" height="1.5" fill="#777"/><rect x="0" y="6" width="1.5" height="1.5" fill="#777"/><rect x="3" y="0" width="1.5" height="1.5" fill="#777"/><rect x="3" y="3" width="1.5" height="1.5" fill="#777"/><rect x="3" y="6" width="1.5" height="1.5" fill="#777"/></svg>
<div class="rl" style="left:1470px;width:113px;text-align:center">Стандартные изделия</div>
<svg width="5" height="9" style="left:1584px;top:131px"><rect x="0" y="0" width="1.5" height="1.5" fill="#777"/><rect x="0" y="3" width="1.5" height="1.5" fill="#777"/><rect x="0" y="6" width="1.5" height="1.5" fill="#777"/><rect x="3" y="0" width="1.5" height="1.5" fill="#777"/><rect x="3" y="3" width="1.5" height="1.5" fill="#777"/><rect x="3" y="6" width="1.5" height="1.5" fill="#777"/></svg>
<svg width="9" height="5" style="left:658px;top:134px"><path d="M0 0 H9 L4.5 5Z" fill="#222"/></svg>
<div class="a" style="left:0;top:145px;width:26px;height:895px;background:#c9c9c9"></div>
<div class="a" style="left:0;top:145px;width:26px;height:125px;background:#f0f0f0"></div>
<div class="a" style="left:0;top:170px;width:26px;height:24px;background:#474747"></div>
<svg width="14" height="17" style="left:7px;top:149px"><path d="M2 2 V15 M2 7 H8 M2 11 H8 M2 15 H8" fill="none" stroke="#222" stroke-width="1.2"/><rect x="0.5" y="0.5" width="3" height="3" fill="none" stroke="#222" stroke-width="1.2"/><rect x="8.5" y="5.5" width="3" height="3" fill="none" stroke="#222" stroke-width="1.2"/><rect x="8.5" y="9.5" width="3" height="3" fill="none" stroke="#222" stroke-width="1.2"/><rect x="8.5" y="13.5" width="3" height="3" fill="none" stroke="#222" stroke-width="1.2"/></svg>
<svg width="14" height="17" style="left:7px;top:174px"><rect x="0.5" y="0.5" width="12" height="15" fill="none" stroke="#fff" stroke-width="1.2"/><rect x="3" y="3" width="3" height="3" fill="none" stroke="#fff"/><path d="M8 4.5 H11 M2.5 9 L4 10.5 L6 8 M8 9.5 H11 M2.5 13 L4 14 L6 12 M8 13 H11" fill="none" stroke="#fff" stroke-width="1.1"/></svg>
<div class="a" style="left:6px;top:196px;font-family:'Liberation Serif';font-style:italic;font-size:17px;line-height:18px;color:#222">f<span style="font-style:normal;font-family:'Liberation Sans';font-size:11px">x</span></div>
<svg width="16" height="16" style="left:5px;top:224px"><path d="M0 2 H15 M0 8 H15 M0 14 H15" stroke="#222" stroke-width="3"/></svg>
<svg width="17" height="17" style="left:5px;top:248px"><path d="M2 1 V7 H5 M2 4 H5" fill="none" stroke="#222" stroke-width="1.2"/><rect x="0.5" y="0.5" width="2" height="2" fill="#222"/><rect x="5" y="2.5" width="2.5" height="2.5" fill="none" stroke="#222" stroke-width="1.2"/><rect x="5" y="6" width="2.5" height="2.5" fill="none" stroke="#222" stroke-width="1.2"/><path d="M13 0 V6 M10 3 H16" fill="none" stroke="#222" stroke-width="1.2"/><rect x="0.5" y="11.5" width="15" height="5" fill="none" stroke="#222" stroke-width="1.2"/><path d="M5.5 11.5 V16.5 M10.5 11.5 V16.5" fill="none" stroke="#222" stroke-width="1.2"/></svg>
<div class="a" style="left:26px;top:145px;width:1px;height:895px;background:#6a6a6a"></div>
<div class="a" style="left:326px;top:145px;width:1px;height:895px;background:#6a6a6a"></div>
<div class="a" style="left:27px;top:145px;width:299px;height:858px;background:#f0f0f0"></div>
<div class="a" style="left:27px;top:145px;width:299px;height:16px;background:#cdcdcd;border-bottom:1px solid #8a8a8a"></div>
<div class="a" style="left:30px;top:146.1px;white-space:nowrap;font-size:11.25px;line-height:14px;color:#262626;">Параметры</div>
<svg width="14" height="14" style="left:311px;top:146px"><g transform="translate(7,7)"><rect x="-1.5" y="-7" width="3" height="4" fill="#222" transform="rotate(0)"/><rect x="-1.5" y="-7" width="3" height="4" fill="#222" transform="rotate(45)"/><rect x="-1.5" y="-7" width="3" height="4" fill="#222" transform="rotate(90)"/><rect x="-1.5" y="-7" width="3" height="4" fill="#222" transform="rotate(135)"/><rect x="-1.5" y="-7" width="3" height="4" fill="#222" transform="rotate(180)"/><rect x="-1.5" y="-7" width="3" height="4" fill="#222" transform="rotate(225)"/><rect x="-1.5" y="-7" width="3" height="4" fill="#222" transform="rotate(270)"/><rect x="-1.5" y="-7" width="3" height="4" fill="#222" transform="rotate(315)"/><circle r="4.2" fill="none" stroke="#222" stroke-width="2.2"/></g></svg>
<div class="a" style="left:30px;top:165.0px;white-space:nowrap;font-size:10px;line-height:14px;color:#262626;">Информация об объекте</div>
<svg width="17" height="17" style="left:276px;top:165px"><circle cx="8.5" cy="8.5" r="8" fill="#222"/><text x="4.5" y="13.5" font-size="13" font-weight="bold" fill="#fff" font-family="Liberation Sans">?</text></svg>
<svg width="12" height="16" style="left:305px;top:166px"><path d="M1.5 2 V15 M1.5 5 H8 M1.5 10 H8 M1.5 15 H8" fill="none" stroke="#222" stroke-width="1.2"/><rect x="0.5" y="0.5" width="2.5" height="2.5" fill="none" stroke="#222" stroke-width="1.2"/><rect x="8" y="3.5" width="3" height="3" fill="none" stroke="#222" stroke-width="1.2"/><rect x="8" y="8.5" width="3" height="3" fill="none" stroke="#222" stroke-width="1.2"/><rect x="8" y="13" width="3" height="3" fill="none" stroke="#222" stroke-width="1.2"/></svg>
<svg width="16" height="16" style="left:303px;top:195px"><path d="M1 1 L15 15 M15 1 L1 15" stroke="#e84545" stroke-width="2.2"/></svg>
<div class="a" style="left:27px;top:217px;width:299px;height:2px;background:#5a5a5a"></div>
<div class="a" style="left:27px;top:219px;width:299px;height:2px;background:#dadada"></div>
<div class="a" style="left:-59.5px;width:200px;top:224.7px;text-align:right;white-space:nowrap;font-size:11px;line-height:14px;color:#444;font-weight:normal">Объекты:</div>
<div class="a" style="left:144px;top:230px;width:154px;height:102px;background:#fff;border:1px solid #b9b9b9"></div>
<div class="a" style="left:147px;top:236.0px;white-space:nowrap;font-size:11.5px;line-height:14px;color:#1e1e1e;letter-spacing:-0.2px">170-04.50.300 Кресло-пул...</div>
<div class="a" style="left:27px;top:354px;width:299px;height:25px;background:#d0d0d0"></div>
<svg width="10" height="6" style="left:130px;top:362px"><path d="M1 5.5 L5 1.5 L9 5.5" fill="none" stroke="#222" stroke-width="1.6"/></svg>
<div class="a" style="left:144px;top:360.3px;white-space:nowrap;font-size:12px;line-height:14px;color:#262626;letter-spacing:0px">Формат информации</div>
<div class="a" style="left:144px;top:383px;width:154px;height:24px;background:#fff;border:1px solid #c3c3c3"></div>
<div class="a" style="left:155px;top:388.8px;white-space:nowrap;font-size:12px;line-height:14px;color:#1e1e1e;">6</div>
<svg width="10" height="6" style="left:282px;top:392px"><path d="M0 0 H10 L5 6Z" fill="#222"/></svg>
<div class="a" style="left:-59.5px;width:200px;top:381.5px;text-align:right;white-space:nowrap;font-size:11.5px;line-height:14px;color:#4a4a4a;font-weight:normal">Количество знаков</div>
<div class="a" style="left:-59.5px;width:200px;top:392.5px;text-align:right;white-space:nowrap;font-size:11.5px;line-height:14px;color:#4a4a4a;font-weight:normal">после запятой:</div>
<div class="a" style="left:144px;top:412px;width:154px;height:23px;background:#fff;border:1px solid #c3c3c3"></div>
<div class="a" style="left:150px;top:416.8px;white-space:nowrap;font-size:12px;line-height:14px;color:#1e1e1e;">миллиметры</div>
<svg width="10" height="6" style="left:282px;top:420px"><path d="M0 0 H10 L5 6Z" fill="#222"/></svg>
<div class="a" style="left:-59.5px;width:200px;top:410.5px;text-align:right;white-space:nowrap;font-size:11.5px;line-height:14px;color:#4a4a4a;font-weight:normal">Единицы измерения</div>
<div class="a" style="left:-59.5px;width:200px;top:421.5px;text-align:right;white-space:nowrap;font-size:11.5px;line-height:14px;color:#4a4a4a;font-weight:normal">длины:</div>
<div class="a" style="left:144px;top:440px;width:154px;height:23px;background:#fff;border:1px solid #c3c3c3"></div>
<div class="a" style="left:150px;top:444.8px;white-space:nowrap;font-size:12px;line-height:14px;color:#1e1e1e;">градусы</div>
<svg width="10" height="6" style="left:282px;top:448px"><path d="M0 0 H10 L5 6Z" fill="#222"/></svg>
<div class="a" style="left:-59.5px;width:200px;top:438.5px;text-align:right;white-space:nowrap;font-size:11.5px;line-height:14px;color:#4a4a4a;font-weight:normal">Единицы измерения</div>
<div class="a" style="left:-59.5px;width:200px;top:449.5px;text-align:right;white-space:nowrap;font-size:11.5px;line-height:14px;color:#4a4a4a;font-weight:normal">углов:</div>
<div class="a" style="left:144px;top:469px;width:16px;height:16px;background:#fff;border:1px solid #555"></div>
<div class="a" style="left:163px;top:469.8px;white-space:nowrap;font-size:12px;line-height:14px;color:#1e1e1e;">Кратко</div>
<div class="a" style="left:27px;top:1003px;width:299px;height:37px;background:#f0f0f0;border-top:1px solid #8c8c8c"></div>
<svg width="13" height="12" style="left:31px;top:1009px"><path d="M0 0 H12 V8 H5 L1 11 V8 H0Z" fill="#222"/></svg>
<div class="a" style="left:47px;top:1007.3px;white-space:nowrap;font-size:12px;line-height:14px;color:#1e1e1e;">Выберите объект для отображения</div>
<div class="a" style="left:47px;top:1022.3px;white-space:nowrap;font-size:12px;line-height:14px;color:#1e1e1e;">информации</div>
<svg width="9" height="9" style="left:311px;top:1009px"><path d="M0.5 0.5 L8.5 8.5 M8.5 0.5 L0.5 8.5" stroke="#333" stroke-width="1.1"/></svg>
<div class="a" style="left:327px;top:145px;width:1593px;height:895px;background:linear-gradient(180deg,#dcdcdc 0%,#d6d6d7 30%,#c4c4c8 60%,#a9abb7 100%)"></div>
<svg width="1920" height="1080" style="left:0;top:0" viewBox="0 0 1920 1080">
<defs><linearGradient id="panelg" x1="0" y1="0" x2="1" y2="1"><stop offset="0" stop-color="#9e9e9e"/><stop offset="0.5" stop-color="#c4c4c4"/><stop offset="1" stop-color="#b6b6b6"/></linearGradient></defs>
<polygon points="735,976 790,944 1007,928 1003,940 925,1004" fill="#bcbcbc" stroke="#3a3a3a" stroke-width="1" stroke-linejoin="round" />
<path d="M828 966 Q870 1000 930 975 L931 968 Z" fill="#a6a6a6" stroke="#555" stroke-width="0.8"/>
<circle cx="757" cy="976" r="1.6" fill="#888" stroke="#444" stroke-width="0.5"/>
<circle cx="776" cy="969" r="1.6" fill="#888" stroke="#444" stroke-width="0.5"/>
<circle cx="842" cy="978" r="1.6" fill="#888" stroke="#444" stroke-width="0.5"/>
<circle cx="848" cy="983" r="1.6" fill="#888" stroke="#444" stroke-width="0.5"/>
<circle cx="912" cy="988" r="1.6" fill="#888" stroke="#444" stroke-width="0.5"/>
<circle cx="917" cy="995" r="1.6" fill="#888" stroke="#444" stroke-width="0.5"/>
<circle cx="987" cy="935" r="1.6" fill="#888" stroke="#444" stroke-width="0.5"/>
<circle cx="951" cy="963" r="1.6" fill="#888" stroke="#444" stroke-width="0.5"/>
<circle cx="993" cy="936" r="1.6" fill="#888" stroke="#444" stroke-width="0.5"/>
<path d="M976 460 L1060 419 Q1068 418 1069 428 L1062 610 L1058 641 L1045 680 L1035 701 L1031 729 L1005 746 L960 770 L902 760 L900 720 L913 708 Q900 690 902 665 Q903 645 912 625 L928 590 L951 504 Q953 485 962 474 Z" fill="#3c3c3c" stroke="#111" stroke-width="1"/>
<path d="M1001 474 L1060 419 Q1068 418 1069 428 L1062 610 Q1060 622 1048 628 L957 708 L971 610 L985 516 Q990 490 1001 474 Z" fill="#2e2e2e" stroke="#111" stroke-width="0.9"/>
<polyline points="976,460 1001,474" fill="none" stroke="#111" stroke-width="0.8" stroke-linejoin="round" />
<polygon points="1006,481 1057,434 1062,438 1056,604 966,688 977,610 992,514" fill="none" stroke="#151515" stroke-width="0.6" stroke-linejoin="round" />
<polyline points="955,485 990,500" fill="none" stroke="#1a1a1a" stroke-width="0.6" stroke-linejoin="round" />
<polygon points="1051,454 1057,465 1046,502 1041,496 1044,477" fill="#262626" stroke="#111" stroke-width="0.7" stroke-linejoin="round" />
<polygon points="1029,477 1036,493 1032,510 1011,531 1015,504 1020,493" fill="#262626" stroke="#111" stroke-width="0.7" stroke-linejoin="round" />
<polygon points="1004,499 1005,521 993,549 991,532 1000,504" fill="#262626" stroke="#111" stroke-width="0.7" stroke-linejoin="round" />
<circle cx="929" cy="635" r="6" fill="none" stroke="#111" stroke-width="0.8"/>
<circle cx="927" cy="677" r="6" fill="none" stroke="#111" stroke-width="0.8"/>
<path d="M983 364 L1030 324 Q1045 318 1060 327 Q1070 335 1072 350 L1075 400 Q1074 412 1066 420 L1015 457 Q1000 465 990 462 L975 450 Q966 440 966 428 L973 382 Q975 370 983 364 Z" fill="#222" stroke="#111" stroke-width="1"/>
<path d="M982 367 Q990 360 1000 361 L1013 369 Q1019 375 1018 393 L1012 450 Q1008 460 995 462 L976 450 Q967 440 967 428 L973 382 Q975 372 982 367 Z" fill="#2a2a2a" stroke="#111" stroke-width="0.9"/>
<path d="M985 372 Q992 366 1000 367 L1010 373 Q1014 378 1013 393 L1008 447 Q1004 455 995 456 L980 446 Q972 438 972 428 L978 386 Q979 377 985 372 Z" fill="none" stroke="#151515" stroke-width="0.6"/>
<polygon points="872,622 930,614 904,646 902,673 913,708 900,720 872,724" fill="#3b3b3b" stroke="#1a1a1a" stroke-width="0.7" stroke-linejoin="round" />
<polyline points="873,660 902,668" fill="none" stroke="#1a1a1a" stroke-width="0.6" stroke-linejoin="round" />
<polyline points="873,700 910,706" fill="none" stroke="#1a1a1a" stroke-width="0.6" stroke-linejoin="round" />
<polygon points="958,722 1040,683 1046,678 1035,705 1031,729 1005,746 960,760" fill="#262626" stroke="#111" stroke-width="0.7" stroke-linejoin="round" />
<path d="M1040 634 L1051 635 Q1060 640 1057 652 L1051 668 L1040 683 L958 722 L956 707 Z" fill="#1c1c1c" stroke="#0e0e0e" stroke-width="1"/>
<polygon points="1042,674 1047,678 962,748 958,741" fill="#2c2c2c" stroke="#111" stroke-width="0.7" stroke-linejoin="round" />
<polygon points="1010,711 1033,707 1031,728 1014,730" fill="#1e1e1e" stroke="#0e0e0e" stroke-width="0.8" stroke-linejoin="round" />
<polygon points="860,700 960,727 1005,746 1012,762 1000,770 860,780" fill="#2c2c2c" stroke="#111" stroke-width="0.6" stroke-linejoin="round" />
<polygon points="721,868 748,830 1031,792 1036,797 930,886" fill="#3a3a3a" stroke="#111" stroke-width="1" stroke-linejoin="round" />
<polygon points="930,886 1036,797 1040,867 931,968" fill="#242424" stroke="#111" stroke-width="1" stroke-linejoin="round" />
<polygon points="720,868 930,886 931,968 725,945" fill="#2e2e2e" stroke="#111" stroke-width="1" stroke-linejoin="round" />
<polyline points="722,873 928,891" fill="none" stroke="#8a8a8a" stroke-width="0.9" stroke-linejoin="round" />
<polygon points="720,772 735,760 1000,748 1012,762 1012,800 958,830 928,846 748,830 720,824" fill="#2b2b2b" stroke="#111" stroke-width="1" stroke-linejoin="round" />
<polyline points="722,772 748,778 915,790 1003,756" fill="none" stroke="#454545" stroke-width="0.9" stroke-linejoin="round" />
<polyline points="720,790 748,796 918,808 1008,770" fill="none" stroke="#111" stroke-width="1.6" stroke-linejoin="round" />
<polyline points="720,792 748,798 918,810 1008,772" fill="none" stroke="#4a4a4a" stroke-width="0.9" stroke-linejoin="round" />
<polyline points="720,809 748,815 924,827 1012,784" fill="none" stroke="#111" stroke-width="1.6" stroke-linejoin="round" />
<polyline points="720,811 748,817 924,829 1012,786" fill="none" stroke="#4a4a4a" stroke-width="0.9" stroke-linejoin="round" />
<polyline points="748,830 928,846 1010,800" fill="none" stroke="#111" stroke-width="1.6" stroke-linejoin="round" />
<polyline points="748,832 928,848 1010,802" fill="none" stroke="#4a4a4a" stroke-width="0.9" stroke-linejoin="round" />
<polygon points="749,829 958,849 958,856 749,836" fill="#a8a8a8" stroke="#333" stroke-width="0.6" stroke-linejoin="round" />
<polygon points="985,803 1005,800 1006,806 986,809" fill="#a8a8a8" stroke="#333" stroke-width="0.5" stroke-linejoin="round" />
<polygon points="940,842 960,845 962,856 942,853" fill="#555" stroke="#222" stroke-width="0.5" stroke-linejoin="round" />
<polygon points="985,803 1003,800 1004,808 987,811" fill="#555" stroke="#222" stroke-width="0.5" stroke-linejoin="round" />
<circle cx="734" cy="858" r="2.5" fill="#555" stroke="#111" stroke-width="0.6"/>
<circle cx="925" cy="880" r="2.5" fill="#555" stroke="#111" stroke-width="0.6"/>
<circle cx="1022" cy="792" r="2.5" fill="#555" stroke="#111" stroke-width="0.6"/>
<polygon points="902,720 911,712 924,713 956,723 961,734 946,775 939,783 906,783 900,768" fill="#262626" stroke="#111" stroke-width="0.9" stroke-linejoin="round" />
<circle cx="918" cy="723" r="4" fill="#2e2e2e" stroke="#111" stroke-width="0.7"/>
<circle cx="945" cy="780" r="3" fill="#2e2e2e" stroke="#111" stroke-width="0.7"/>
<polygon points="773,512 792,510 792,625 775,625" fill="#d4d8d4" stroke="#333" stroke-width="0.8" stroke-linejoin="round" />
<polyline points="781,512 781,625" fill="none" stroke="#888" stroke-width="0.7" stroke-linejoin="round" />
<ellipse cx="788" cy="504" rx="28" ry="9" fill="#d2d6d2" stroke="#333" stroke-width="0.8" transform="rotate(-5 788 504)"/>
<ellipse cx="788" cy="500" rx="26" ry="6" fill="#e4e8e4" stroke="#444" stroke-width="0.6" transform="rotate(-5 788 500)"/>
<polygon points="759,518 775,516 775,523 759,524" fill="#333" stroke="#111" stroke-width="0.6" stroke-linejoin="round" />
<polygon points="784,537 800,524 900,494 952,500 940,547 930,613 915,613 857,617 788,608" fill="#262626" stroke="#111" stroke-width="1" stroke-linejoin="round" />
<polygon points="784,537 800,524 900,494 952,500 940,522 888,543 790,542" fill="#2b2b2b" stroke="#111" stroke-width="0.8" stroke-linejoin="round" />
<polyline points="786,570 888,580 940,565" fill="none" stroke="#111" stroke-width="1.2" stroke-linejoin="round" />
<polyline points="786,575 888,585 938,570" fill="none" stroke="#111" stroke-width="0.8" stroke-linejoin="round" />
<polyline points="888,543 888,615" fill="none" stroke="#111" stroke-width="0.8" stroke-linejoin="round" />
<polyline points="847,543 849,616" fill="none" stroke="#111" stroke-width="0.6" stroke-linejoin="round" />
<ellipse cx="880" cy="500" rx="15" ry="8" fill="#dcdcdc" stroke="#333" stroke-width="0.8" transform="rotate(0 880 500)"/>
<ellipse cx="880" cy="490" rx="10" ry="6" fill="#e8e8e8" stroke="#333" stroke-width="0.8" transform="rotate(0 880 490)"/>
<polygon points="877,478 883,478 883,488 877,488" fill="#ddd" stroke="#333" stroke-width="0.6" stroke-linejoin="round" />
<polygon points="872,515 888,512 888,530 872,532" fill="#333" stroke="#111" stroke-width="0.6" stroke-linejoin="round" />
<ellipse cx="880" cy="531" rx="8" ry="3" fill="#ccc" stroke="#333" stroke-width="0.6" transform="rotate(0 880 531)"/>
<polygon points="622,219 645,244 657,503 637,482" fill="#1c1c1c" stroke="#111" stroke-width="1" stroke-linejoin="round" />
<polyline points="624.875,225.125 639.5,482.625" fill="none" stroke="#cfcfcf" stroke-width="0.9" stroke-linejoin="round" />
<polyline points="627.75,228.25 642.0,485.25" fill="none" stroke="#cfcfcf" stroke-width="0.9" stroke-linejoin="round" />
<polyline points="630.625,231.375 644.5,487.875" fill="none" stroke="#cfcfcf" stroke-width="0.9" stroke-linejoin="round" />
<polyline points="633.5,234.5 647.0,490.5" fill="none" stroke="#cfcfcf" stroke-width="0.9" stroke-linejoin="round" />
<polyline points="636.375,237.625 649.5,493.125" fill="none" stroke="#cfcfcf" stroke-width="0.9" stroke-linejoin="round" />
<polyline points="639.25,240.75 652.0,495.75" fill="none" stroke="#cfcfcf" stroke-width="0.9" stroke-linejoin="round" />
<polyline points="642.125,243.875 654.5,498.375" fill="none" stroke="#cfcfcf" stroke-width="0.9" stroke-linejoin="round" />
<polygon points="622,219 913,173 934,197 645,244" fill="#1c1c1c" stroke="#111" stroke-width="1" stroke-linejoin="round" />
<polyline points="626.0909090909091,221.27272727272728 912.9090909090909,175.1818181818182" fill="none" stroke="#e6e6e6" stroke-width="1.0" stroke-linejoin="round" />
<polyline points="628.1818181818181,223.54545454545453 914.8181818181819,177.36363636363637" fill="none" stroke="#e6e6e6" stroke-width="1.0" stroke-linejoin="round" />
<polyline points="630.2727272727273,225.8181818181818 916.7272727272727,179.54545454545453" fill="none" stroke="#e6e6e6" stroke-width="1.0" stroke-linejoin="round" />
<polyline points="632.3636363636364,228.0909090909091 918.6363636363636,181.72727272727272" fill="none" stroke="#e6e6e6" stroke-width="1.0" stroke-linejoin="round" />
<polyline points="634.4545454545455,230.36363636363637 920.5454545454545,183.9090909090909" fill="none" stroke="#e6e6e6" stroke-width="1.0" stroke-linejoin="round" />
<polyline points="636.5454545454545,232.63636363636363 922.4545454545455,186.0909090909091" fill="none" stroke="#e6e6e6" stroke-width="1.0" stroke-linejoin="round" />
<polyline points="638.6363636363636,234.9090909090909 924.3636363636364,188.27272727272728" fill="none" stroke="#e6e6e6" stroke-width="1.0" stroke-linejoin="round" />
<polyline points="640.7272727272727,237.1818181818182 926.2727272727273,190.45454545454544" fill="none" stroke="#e6e6e6" stroke-width="1.0" stroke-linejoin="round" />
<polyline points="642.8181818181819,239.45454545454547 928.1818181818181,192.63636363636363" fill="none" stroke="#e6e6e6" stroke-width="1.0" stroke-linejoin="round" />
<polyline points="644.9090909090909,241.72727272727272 930.0909090909091,194.8181818181818" fill="none" stroke="#e6e6e6" stroke-width="1.0" stroke-linejoin="round" />
<polygon points="662,212 690,207 691,211 663,216" fill="#222" stroke="#111" stroke-width="0.6" stroke-linejoin="round" />
<polygon points="848,181 874,177 875,181 849,185" fill="#222" stroke="#111" stroke-width="0.6" stroke-linejoin="round" />
<polygon points="645,244 934,197 935,206 949,468 667,513 656,504" fill="#e8e8e8" stroke="#111" stroke-width="1" stroke-linejoin="round" />
<path d="M645 244 Q652 250 654 254" fill="none" stroke="#222" stroke-width="0.8"/>
<path d="M921 199 Q930 203 931 211" fill="none" stroke="#222" stroke-width="0.8"/>
<polygon points="654,254 931,211 949,468 667,512" fill="#b0b0b0" stroke="#111" stroke-width="1.8" stroke-linejoin="round" />
<polygon points="658,258 928,215 945,465 671,508" fill="url(#panelg)" stroke="none" stroke-width="0" stroke-linejoin="round" />
<polyline points="928,215 945,465 671,508" fill="none" stroke="#1a1a1a" stroke-width="2.2" stroke-linejoin="round" />
<polyline points="932,212 949,468" fill="none" stroke="#222" stroke-width="1.2" stroke-linejoin="round" />
<path d="M674 268 L852 240 Q858 239 858 245 L866 380 Q866 386 860 387 L684 413 Q678 414 678 408 L669 274 Q669 269 674 268 Z" fill="#2e2e2e" stroke="#111" stroke-width="1.2"/>
<polygon points="676,276 850,248 858,380 684,406" fill="none" stroke="#1a1a1a" stroke-width="0.7" stroke-linejoin="round" />
<polygon points="684,284 842,260 848,374 690,398" fill="#6aafb0" stroke="#111" stroke-width="1" stroke-linejoin="round" />
<path d="M686 420 L800 399 Q807 398 807 405 L809 474 Q809 480 803 481 L690 491 Q684 492 684 486 L680 427 Q680 421 686 420 Z" fill="#2a2a2a" stroke="#111" stroke-width="1"/>
<polygon points="697,415 792,401 795,470 700,482" fill="#1e1e1e" stroke="#111" stroke-width="0.8" stroke-linejoin="round" />
<polygon points="705,426 785,414 788,458 708,470" fill="#9cbfc0" stroke="#111" stroke-width="1" stroke-linejoin="round" />
<circle cx="686" cy="426" r="1.5" fill="#444" stroke="#111" stroke-width="0.5"/>
<circle cx="801" cy="405" r="1.5" fill="#444" stroke="#111" stroke-width="0.5"/>
<circle cx="804" cy="476" r="1.5" fill="#444" stroke="#111" stroke-width="0.5"/>
<circle cx="689" cy="485" r="1.5" fill="#444" stroke="#111" stroke-width="0.5"/>
<polygon points="699,430 703,429 703,435 699,436" fill="#3a3a3a" stroke="#111" stroke-width="0.5" stroke-linejoin="round" />
<polygon points="699,439 703,438 703,444 699,445" fill="#3a3a3a" stroke="#111" stroke-width="0.5" stroke-linejoin="round" />
<polygon points="699,448 703,447 703,453 699,454" fill="#3a3a3a" stroke="#111" stroke-width="0.5" stroke-linejoin="round" />
<polygon points="699,457 703,456 703,462 699,463" fill="#3a3a3a" stroke="#111" stroke-width="0.5" stroke-linejoin="round" />
<polygon points="699,466 703,465 703,471 699,472" fill="#3a3a3a" stroke="#111" stroke-width="0.5" stroke-linejoin="round" />
<text x="745" y="478" font-size="4" fill="#111" font-family="Liberation Sans" transform="rotate(-8 745 478)">TOPPY</text>
<polygon points="880,241 896,239 896,246 880,248" fill="#222" stroke="#111" stroke-width="1" stroke-linejoin="round" />
<circle cx="894" cy="261" r="11" fill="#c81010" stroke="#111" stroke-width="1"/>
<circle cx="896" cy="258" r="6" fill="#e02020" stroke="none" stroke-width="0"/>
<polygon points="880,275 903,272 903,279 880,282" fill="#222" stroke="#111" stroke-width="1" stroke-linejoin="round" />
<circle cx="893" cy="289" r="9" fill="#d81010" stroke="#111" stroke-width="1"/>
<polygon points="884,300 902,298 902,305 884,307" fill="#222" stroke="#111" stroke-width="1" stroke-linejoin="round" />
<circle cx="894" cy="323" r="14" fill="#3a3a3a" stroke="#111" stroke-width="1"/>
<circle cx="895" cy="325" r="10" fill="#222" stroke="#111" stroke-width="0.8"/>
<polyline points="892,315 897,334" fill="none" stroke="#555" stroke-width="2" stroke-linejoin="round" />
<polygon points="884,338 902,336 902,343 884,345" fill="#222" stroke="#111" stroke-width="1" stroke-linejoin="round" />
<polygon points="886,348 905,346 906,368 887,370" fill="#222" stroke="#111" stroke-width="0.8" stroke-linejoin="round" />
<circle cx="896" cy="358" r="7" fill="#2a2a2a" stroke="#111" stroke-width="0.8"/>
<circle cx="896" cy="358" r="4" fill="#444" stroke="#111" stroke-width="0.6"/>
<polygon points="844,395 917,384 919,430 846,439" fill="#123f7a" stroke="#111" stroke-width="1" stroke-linejoin="round" />
<polygon points="850,402 872,399 873,412 851,415" fill="#7ec040" stroke="#111" stroke-width="0.6" stroke-linejoin="round" />
<polygon points="874,399 884,398 884,411 874,412" fill="#9ccc50" stroke="#111" stroke-width="0.5" stroke-linejoin="round" />
<polygon points="886,397 910,394 910,408 886,410" fill="#1a2a50" stroke="#111" stroke-width="0.5" stroke-linejoin="round" />
<polygon points="898,402 904,401 904,407 898,408" fill="#eee" stroke="none" stroke-width="0" stroke-linejoin="round" />
<polygon points="904,401 910,400 910,406 904,407" fill="#c22" stroke="none" stroke-width="0" stroke-linejoin="round" />
<polygon points="858,419 872,417 872,430 858,432" fill="#1a2a50" stroke="#ddd" stroke-width="0.6" stroke-linejoin="round" />
<polygon points="900,418 906,417 906,422 900,423" fill="#eee" stroke="none" stroke-width="0" stroke-linejoin="round" />
<polygon points="818,393 836,391 836,398 818,400" fill="#222" stroke="#111" stroke-width="1" stroke-linejoin="round" />
<circle cx="827" cy="408" r="8" fill="#4a8a28" stroke="#111" stroke-width="1"/>
<polygon points="818,418 836,416 836,423 818,425" fill="#222" stroke="#111" stroke-width="1" stroke-linejoin="round" />
<circle cx="828" cy="433" r="8" fill="#1c1c1c" stroke="#111" stroke-width="1"/>
<polygon points="816,441 838,439 838,447 816,449" fill="#222" stroke="#111" stroke-width="1" stroke-linejoin="round" />
<circle cx="832" cy="460" r="9" fill="#4a4a4a" stroke="#111" stroke-width="1"/>
<circle cx="833" cy="462" r="6" fill="#2a2a2a" stroke="#111" stroke-width="0.7"/>
<polygon points="848,441 866,439 866,446 848,448" fill="#222" stroke="#111" stroke-width="1" stroke-linejoin="round" />
<circle cx="858" cy="457" r="8" fill="#4a8a28" stroke="#111" stroke-width="1"/>
<polygon points="876,436 894,434 894,441 876,443" fill="#222" stroke="#111" stroke-width="1" stroke-linejoin="round" />
<circle cx="886" cy="452" r="9" fill="#4a4a4a" stroke="#111" stroke-width="1"/>
<circle cx="887" cy="454" r="6" fill="#2a2a2a" stroke="#111" stroke-width="0.7"/>
<polyline points="883,449 891,458" fill="none" stroke="#888" stroke-width="1.5" stroke-linejoin="round" />
<polygon points="905,432 921,430 921,437 905,439" fill="#222" stroke="#111" stroke-width="1" stroke-linejoin="round" />
<circle cx="915" cy="449" r="9" fill="#4a4a4a" stroke="#111" stroke-width="1"/>
<circle cx="916" cy="451" r="6" fill="#2a2a2a" stroke="#111" stroke-width="0.7"/>
<polyline points="912,446 920,455" fill="none" stroke="#888" stroke-width="1.5" stroke-linejoin="round" />
<polygon points="800,528 830,518 868,522 852,545 810,540" fill="#1e1e1e" stroke="#0e0e0e" stroke-width="0.7" stroke-linejoin="round" />
<circle cx="808" cy="534" r="1.3" fill="#d8d8d8" stroke="none" stroke-width="0"/>
<circle cx="822" cy="539" r="1.3" fill="#d8d8d8" stroke="none" stroke-width="0"/>
<circle cx="842" cy="540" r="1.3" fill="#d8d8d8" stroke="none" stroke-width="0"/>
<circle cx="858" cy="530" r="1.3" fill="#d8d8d8" stroke="none" stroke-width="0"/>
<circle cx="812" cy="527" r="1.3" fill="#d8d8d8" stroke="none" stroke-width="0"/>
<path d="M812 533 Q814 515 820 505 L818 498 Q830 492 843 498 L842 505 Q849 516 852 533 Q832 542 812 533 Z" fill="#262626" stroke="#111" stroke-width="0.9"/>
<polyline points="818,503 832,506 846,503" fill="none" stroke="#131313" stroke-width="0.9" stroke-linejoin="round" />
<polyline points="818,510 832,513 846,510" fill="none" stroke="#131313" stroke-width="0.9" stroke-linejoin="round" />
<polyline points="818,517 832,520 846,517" fill="none" stroke="#131313" stroke-width="0.9" stroke-linejoin="round" />
<polyline points="818,524 832,527 846,524" fill="none" stroke="#131313" stroke-width="0.9" stroke-linejoin="round" />
<path d="M800 446 Q822 462 830 496" fill="none" stroke="#111" stroke-width="14" stroke-linecap="round"/>
<path d="M800 446 Q822 462 830 496" fill="none" stroke="#2a2a2a" stroke-width="12" stroke-linecap="round"/>
<polygon points="773,438 790,418 807,425 816,437 809,447 793,459 781,453" fill="#262626" stroke="#111" stroke-width="1" stroke-linejoin="round" />
<polyline points="781,453 776,444 792,425 809,432" fill="none" stroke="#151515" stroke-width="0.7" stroke-linejoin="round" />
<circle cx="798" cy="421" r="2.4" fill="#a22" stroke="#111" stroke-width="0.6"/>
<circle cx="791" cy="428" r="2.4" fill="#8a8a20" stroke="#111" stroke-width="0.6"/>
<circle cx="809" cy="432" r="2.4" fill="#333" stroke="#111" stroke-width="0.6"/>
<circle cx="803" cy="440" r="2.4" fill="#4a6a20" stroke="#111" stroke-width="0.6"/>
<polygon points="790,900 857,908 860,962 792,957" fill="#2a2a2a" stroke="#111" stroke-width="0.9" stroke-linejoin="round" />
<circle cx="821" cy="903" r="3" fill="#4a4a4a" stroke="#111" stroke-width="0.7"/>
<circle cx="821" cy="902.2" r="1.3" fill="#bbb" stroke="none" stroke-width="0"/>
<circle cx="851" cy="907" r="3" fill="#4a4a4a" stroke="#111" stroke-width="0.7"/>
<circle cx="851" cy="906.2" r="1.3" fill="#bbb" stroke="none" stroke-width="0"/>
<circle cx="796" cy="954" r="3" fill="#4a4a4a" stroke="#111" stroke-width="0.7"/>
<circle cx="796" cy="953.2" r="1.3" fill="#bbb" stroke="none" stroke-width="0"/>
<circle cx="825" cy="957" r="3" fill="#4a4a4a" stroke="#111" stroke-width="0.7"/>
<circle cx="825" cy="956.2" r="1.3" fill="#bbb" stroke="none" stroke-width="0"/>
<circle cx="855" cy="961" r="3" fill="#4a4a4a" stroke="#111" stroke-width="0.7"/>
<circle cx="855" cy="960.2" r="1.3" fill="#bbb" stroke="none" stroke-width="0"/>
<polygon points="775,755 800,760 807,936 782,935" fill="#2a2a2a" stroke="#111" stroke-width="1" stroke-linejoin="round" />
<polygon points="800,760 808,762 815,920 807,936" fill="#1e1e1e" stroke="#111" stroke-width="0.8" stroke-linejoin="round" />
<polygon points="807,900 838,906 838,932 807,936" fill="#1c1c1c" stroke="#111" stroke-width="0.8" stroke-linejoin="round" />
<polygon points="713,750 715,766 823,768 823,755" fill="#222" stroke="#111" stroke-width="0.8" stroke-linejoin="round" />
<path d="M659 660 Q660 645 673 637 L750 642 L751 633 Q754 622 762 621 L884 633 Q891 636 888 641 L870 670 L871 675 L872.5 752 Q870 760 861 761 L823 764 L713 753 L670 744 Q660 740 660 730 L658 683 Z" fill="#232323" stroke="#111" stroke-width="1"/>
<path d="M659 660 Q660 645 673 637 L750 642 L856 652 L870 672 L823 680 L690 663 L662 662 Z" fill="#262626" stroke="#111" stroke-width="0.8"/>
<path d="M751 633 Q754 622 762 621 L884 633 Q891 636 888 641 L870 670 L857 681 L857 663 L751 648 Z" fill="#282828" stroke="#111" stroke-width="0.9"/>
<polyline points="752,640 866,652 888,641" fill="none" stroke="#111" stroke-width="0.8" stroke-linejoin="round" />
<path d="M659 683 Q680 700 707 703 L823 713 L872 700" fill="none" stroke="#0e0e0e" stroke-width="1.4"/>
<path d="M660 690 Q682 707 709 710 L823 720 L872 707" fill="none" stroke="#0e0e0e" stroke-width="1"/>
<polyline points="823,680 823,763" fill="none" stroke="#111" stroke-width="0.7" stroke-linejoin="round" />
<polyline points="707,663 712,752" fill="none" stroke="#111" stroke-width="0.7" stroke-linejoin="round" />
<circle cx="765" cy="692" r="8.5" fill="#e8d820" stroke="#111" stroke-width="1"/>
<path d="M761 698 V686 H767 Q771 686 771 690 Q771 694 766 694 L770 699" fill="none" stroke="#111" stroke-width="2"/>
<ellipse cx="753" cy="657" rx="7" ry="4" fill="#cfcfcf" stroke="#222" stroke-width="0.9" transform="rotate(0 753 657)"/>
<ellipse cx="753" cy="656" rx="4.5" ry="2.2" fill="#f0f0f0" stroke="none" stroke-width="0" transform="rotate(0 753 656)"/>
<ellipse cx="777" cy="659" rx="7" ry="4" fill="#cfcfcf" stroke="#222" stroke-width="0.9" transform="rotate(0 777 659)"/>
<ellipse cx="777" cy="658" rx="4.5" ry="2.2" fill="#f0f0f0" stroke="none" stroke-width="0" transform="rotate(0 777 658)"/>
<ellipse cx="744" cy="664" rx="7" ry="4" fill="#cfcfcf" stroke="#222" stroke-width="0.9" transform="rotate(0 744 664)"/>
<ellipse cx="744" cy="663" rx="4.5" ry="2.2" fill="#f0f0f0" stroke="none" stroke-width="0" transform="rotate(0 744 663)"/>
<ellipse cx="769" cy="667" rx="7" ry="4" fill="#cfcfcf" stroke="#222" stroke-width="0.9" transform="rotate(0 769 667)"/>
<ellipse cx="769" cy="666" rx="4.5" ry="2.2" fill="#f0f0f0" stroke="none" stroke-width="0" transform="rotate(0 769 666)"/>
<ellipse cx="801" cy="663" rx="7" ry="4" fill="#1c1c1c" stroke="#0c0c0c" stroke-width="0.8" transform="rotate(0 801 663)"/>
<ellipse cx="794" cy="670" rx="7" ry="4" fill="#1c1c1c" stroke="#0c0c0c" stroke-width="0.8" transform="rotate(0 794 670)"/>
<polygon points="678,655 686,654 687,668 679,669" fill="#3a3a3a" stroke="#111" stroke-width="0.6" stroke-linejoin="round" />
<polygon points="684,640 688,628 690,616 700,612 712,614 716,626 722,645 704,650" fill="#262626" stroke="#111" stroke-width="0.9" stroke-linejoin="round" />
<polyline points="688,620 704,623 718,620" fill="none" stroke="#151515" stroke-width="0.8" stroke-linejoin="round" />
<polyline points="688,627 704,630 718,627" fill="none" stroke="#151515" stroke-width="0.8" stroke-linejoin="round" />
<polyline points="688,634 704,637 718,634" fill="none" stroke="#151515" stroke-width="0.8" stroke-linejoin="round" />
<polyline points="688,641 704,644 718,641" fill="none" stroke="#151515" stroke-width="0.8" stroke-linejoin="round" />
<path d="M668 566 Q692 582 701 614" fill="none" stroke="#111" stroke-width="12" stroke-linecap="round"/>
<path d="M668 566 Q692 582 701 614" fill="none" stroke="#2a2a2a" stroke-width="10" stroke-linecap="round"/>
<path d="M643 556 Q645 548 652 542 L660 537 Q667 535 672 539 L682 548 Q686 553 682 560 L677 572 Q672 579 664 578 L650 570 Q642 564 643 556 Z" fill="#262626" stroke="#111" stroke-width="1"/>
<polyline points="645,563 650,556 668,545 683,552" fill="none" stroke="#141414" stroke-width="0.7" stroke-linejoin="round" />
<circle cx="661" cy="542" r="2.2" fill="#a22" stroke="#111" stroke-width="0.6"/>
<circle cx="655" cy="548" r="2.2" fill="#8a8a20" stroke="#111" stroke-width="0.6"/>
<circle cx="670" cy="552" r="2.2" fill="#4a6a20" stroke="#111" stroke-width="0.6"/>
<circle cx="677" cy="547" r="2.2" fill="#333" stroke="#111" stroke-width="0.6"/>
<ellipse cx="708" cy="657" rx="15" ry="8" fill="#bfbfbf" stroke="#333" stroke-width="0.8" transform="rotate(0 708 657)"/>
<ellipse cx="708" cy="651" rx="12" ry="6" fill="#e6e6e6" stroke="#444" stroke-width="0.7" transform="rotate(0 708 651)"/>
<polygon points="697,640 701,640 701,650 697,650" fill="#ddd" stroke="#444" stroke-width="0.5" stroke-linejoin="round" />
</svg>
<div class="a" style="left:830px;top:145px;width:533px;height:26px;background:#f0f0f0;border:1px solid #7a7a7a;border-top:none"></div>
<div class="a" style="left:847px;top:145px;width:1px;height:25px;background:#9a9a9a"></div>
<div class="a" style="left:875px;top:145px;width:1px;height:25px;background:#9a9a9a"></div>
<div class="a" style="left:1076px;top:145px;width:1px;height:25px;background:#9a9a9a"></div>
<div class="a" style="left:999px;top:145px;width:2px;height:25px;background:#6a6a6a"></div>
<div class="a" style="left:1175px;top:145px;width:2px;height:25px;background:#6a6a6a"></div>
<div class="a" style="left:1306px;top:145px;width:2px;height:25px;background:#6a6a6a"></div>
<div class="a" style="left:831px;top:145px;width:16px;height:25px;background:#e4e4e4"></div>
<div class="a" style="left:1001px;top:145px;width:26px;height:25px;background:#474747"></div>
<div class="a" style="left:1176px;top:145px;width:26px;height:25px;background:#474747"></div>
<div class="a" style="left:1203px;top:145px;width:26px;height:25px;background:#474747"></div>
<div class="a" style="left:1258px;top:145px;width:48px;height:25px;background:#474747"></div>
<svg width="12" height="6" style="left:833px;top:149px"><rect x="0.0" y="0" width="1.6" height="1.6" fill="#333"/><rect x="0.0" y="3" width="1.6" height="1.6" fill="#333"/><rect x="2.5" y="0" width="1.6" height="1.6" fill="#333"/><rect x="2.5" y="3" width="1.6" height="1.6" fill="#333"/><rect x="5.0" y="0" width="1.6" height="1.6" fill="#333"/><rect x="5.0" y="3" width="1.6" height="1.6" fill="#333"/><rect x="7.5" y="0" width="1.6" height="1.6" fill="#333"/><rect x="7.5" y="3" width="1.6" height="1.6" fill="#333"/><rect x="10.0" y="0" width="1.6" height="1.6" fill="#333"/><rect x="10.0" y="3" width="1.6" height="1.6" fill="#333"/></svg>
<svg width="16" height="16" style="left:854px;top:149px"><path d="M2 1 V15 H14 V9 H7 V1 Z" fill="none" stroke="#222" stroke-width="1.2"/><circle cx="2" cy="1.5" r="1.3" fill="none" stroke="#222" stroke-width="1.2"/><circle cx="2" cy="15" r="1.3" fill="none" stroke="#222" stroke-width="1.2"/><circle cx="14" cy="15" r="1.3" fill="none" stroke="#222" stroke-width="1.2"/><circle cx="14" cy="9" r="1.3" fill="none" stroke="#222" stroke-width="1.2"/></svg>
<svg width="16" height="16" style="left:881px;top:149px"><circle cx="6" cy="7" r="5" fill="none" stroke="#222" stroke-width="1.2"/><path d="M9.5 10.5 L14 15" stroke="#222" stroke-width="2"/><path d="M7 2 H15 V9" fill="none" stroke="#333" stroke-dasharray="1 1"/></svg>
<svg width="9" height="5" style="left:909px;top:155px"><path d="M0 0 H9 L4.5 5Z" fill="#222"/></svg>
<svg width="9" height="5" style="left:984px;top:155px"><path d="M0 0 H9 L4.5 5Z" fill="#222"/></svg>
<svg width="9" height="5" style="left:1060px;top:155px"><path d="M0 0 H9 L4.5 5Z" fill="#222"/></svg>
<svg width="9" height="5" style="left:1110px;top:155px"><path d="M0 0 H9 L4.5 5Z" fill="#222"/></svg>
<svg width="9" height="5" style="left:1158px;top:155px"><path d="M0 0 H9 L4.5 5Z" fill="#222"/></svg>
<svg width="16" height="16" style="left:930px;top:149px"><path d="M3 15 L6 10 H16 L13 15 Z" fill="#222"/><path d="M8 11 V5 H5 L9 1 L13 5 H10 V11" fill="#fff" stroke="#222" stroke-width="1.2"/></svg>
<svg width="17" height="17" style="left:956px;top:149px"><path d="M8 11 V1 M8 11 H16 M8 11 L2 16 M6 3 L8 1 L10 3 M14 9 L16 11 L14 13" fill="none" stroke="#222" stroke-width="1.2"/><rect x="6" y="9" width="4" height="4" fill="#fff" stroke="#222"/></svg>
<svg width="16" height="16" style="left:1006px;top:149px"><path d="M8 1 L15 4.5 V12 L8 15.5 L1 12 V4.5 Z" fill="#fff"/><path d="M1 4.5 L8 8 L15 4.5 M8 8 V15.5" fill="none" stroke="#474747" stroke-width="1"/></svg>
<svg width="17" height="17" style="left:1033px;top:149px"><path d="M8.5 1 L16 4.5 V12.5 L8.5 16 L1 12.5 V4.5 Z M1 4.5 L8.5 8 L16 4.5 M8.5 8 V16 M8.5 1 V8 M1 12.5 L8.5 8 L16 12.5" fill="none" stroke="#222" stroke-width="1.1"/></svg>
<svg width="17" height="16" style="left:1082px;top:149px"><path d="M1 8 C4 3 13 3 16 8 C13 13 4 13 1 8 Z" fill="none" stroke="#222" stroke-width="1.5"/><circle cx="8.5" cy="8" r="2.5" fill="#222"/><path d="M2 1 L15 15" stroke="#222" stroke-width="1.5"/></svg>
<svg width="18" height="16" style="left:1130px;top:148px"><rect x="0.5" y="2" width="17" height="12" fill="#222"/><path d="M2 8 C5 4 13 4 16 8 C13 12 5 12 2 8 Z" fill="#fff"/><circle cx="9" cy="8" r="2.5" fill="#222"/></svg>
<svg width="16" height="16" style="left:1181px;top:149px"><path d="M3 13 L13 3 M3 13 L13 13" fill="none" stroke="#fff" stroke-width="1.2"/><circle cx="3" cy="3" r="1.6" fill="none" stroke="#fff" stroke-width="1.2"/><circle cx="13" cy="3" r="1.6" fill="none" stroke="#fff" stroke-width="1.2"/><circle cx="3" cy="13" r="1.6" fill="none" stroke="#fff" stroke-width="1.2"/><circle cx="13" cy="13" r="1.6" fill="none" stroke="#fff" stroke-width="1.2"/></svg>
<svg width="16" height="16" style="left:1208px;top:149px"><path d="M1 2 H9 V14 H1 Z M9 5 L14 3 V12 L9 14" fill="#ddd" stroke="#fff" stroke-width="1"/><path d="M1 2 L9 14" stroke="#474747"/></svg>
<svg width="16" height="16" style="left:1235px;top:149px"><path d="M1 6 L8 1 L15 8 L8 15 L1 15 Z" fill="#222"/><path d="M4 6 L8 3 L13 8 L8 13" fill="none" stroke="#fff" stroke-width="1"/></svg>
<svg width="16" height="16" style="left:1264px;top:149px"><path d="M1 1 H15 L10 8 V15 H7 V8 Z" fill="#fff"/></svg>
<svg width="9" height="5" style="left:1291px;top:155px"><path d="M0 0 H9 L4.5 5Z" fill="#fff"/></svg>
<svg width="16" height="16" style="left:1314px;top:149px"><path d="M2 15 L10 6 M9 3 L13 1 L15 3 L13 7" fill="none" stroke="#c0c0c0" stroke-width="2"/></svg>
<svg width="16" height="16" style="left:1341px;top:149px"><path d="M1 1 L15 15 M15 1 L1 15" stroke="#e84545" stroke-width="2.2"/></svg>
<svg width="100" height="100" style="left:330px;top:895px" viewBox="330 895 100 100">
<path d="M401 966 L398 925" stroke="#4a90d0" stroke-width="3.5"/>
<path d="M392 928 L398 915 L404 928 Z" fill="#6aa0e0" stroke="#3a70b0" stroke-width="0.6"/>
<text x="392" y="912" font-size="11" fill="#5a7ad0" font-family="Liberation Serif">Z</text>
<path d="M401 966 L362 961" stroke="#e05a5a" stroke-width="3.5"/>
<path d="M364 955 L349 960 L364 965 Z" fill="#e06060" stroke="#c04040" stroke-width="0.6"/>
<text x="337" y="965" font-size="11" fill="#d04848" font-family="Liberation Serif">X</text>
<path d="M401 966 L386 979" stroke="#40a040" stroke-width="3.5"/>
<path d="M382 975 L377 986 L389 981 Z" fill="#40b040" stroke="#308030" stroke-width="0.6"/>
<text x="372" y="993" font-size="10" fill="#50a050" font-family="Liberation Serif">Y</text>
<circle cx="401" cy="966" r="6" fill="#e8e070" stroke="#b0a040" stroke-width="0.6"/>
</svg>
<div class="a" style="left:1520px;top:760px;width:397px;height:277px;background:#f0f0f0;border:1px solid #7a7a7a"></div>
<div class="a" style="left:1521px;top:761px;width:395px;height:19px;background:#e2e2e2"></div>
<svg width="5" height="12" style="left:1524px;top:765px"><rect x="0.0" y="0" width="1.4" height="1.4" fill="#aaa"/><rect x="0.0" y="3" width="1.4" height="1.4" fill="#aaa"/><rect x="0.0" y="6" width="1.4" height="1.4" fill="#aaa"/><rect x="0.0" y="9" width="1.4" height="1.4" fill="#aaa"/><rect x="2.5" y="0" width="1.4" height="1.4" fill="#aaa"/><rect x="2.5" y="3" width="1.4" height="1.4" fill="#aaa"/><rect x="2.5" y="6" width="1.4" height="1.4" fill="#aaa"/><rect x="2.5" y="9" width="1.4" height="1.4" fill="#aaa"/></svg>
<svg width="13" height="13" style="left:1534px;top:764px"><g transform="translate(6.5,6.5)"><rect x="-1.4" y="-6.5" width="2.8" height="3.5" fill="#222" transform="rotate(0)"/><rect x="-1.4" y="-6.5" width="2.8" height="3.5" fill="#222" transform="rotate(45)"/><rect x="-1.4" y="-6.5" width="2.8" height="3.5" fill="#222" transform="rotate(90)"/><rect x="-1.4" y="-6.5" width="2.8" height="3.5" fill="#222" transform="rotate(135)"/><rect x="-1.4" y="-6.5" width="2.8" height="3.5" fill="#222" transform="rotate(180)"/><rect x="-1.4" y="-6.5" width="2.8" height="3.5" fill="#222" transform="rotate(225)"/><rect x="-1.4" y="-6.5" width="2.8" height="3.5" fill="#222" transform="rotate(270)"/><rect x="-1.4" y="-6.5" width="2.8" height="3.5" fill="#222" transform="rotate(315)"/><circle r="3.8" fill="none" stroke="#222" stroke-width="2"/></g></svg>
<div class="a" style="left:1549px;top:764px;font-size:10px;line-height:14px;color:#262626;white-space:nowrap">Информация</div>
<svg width="11" height="10" style="left:1895px;top:765px"><path d="M1 1 L10 9 M10 1 L1 9" stroke="#222" stroke-width="2"/></svg>
<svg width="17" height="17" style="left:1526px;top:784px"><path d="M1 1 H14 L16 3 V16 H1 Z" fill="none" stroke="#222" stroke-width="1.3"/><rect x="4" y="1" width="7" height="4" fill="#222"/><path d="M3.5 9 H13 V16 H3.5" fill="none" stroke="#222" stroke-width="1.3"/><path d="M8 15 L14 8.5 L15.5 10 L9.5 16 Z" fill="#222"/></svg>
<svg width="17" height="17" style="left:1552px;top:784px"><path d="M4 1 H13 V5 M1 5 H16 V12 H1 Z M4 9 H13 V16 H4 Z" fill="none" stroke="#222" stroke-width="1.3"/></svg>
<div class="a" style="left:1521px;top:805px;width:395px;height:1px;background:#a0a0a0"></div>
<div class="a" style="left:1521px;top:806px;width:395px;height:230px;background:#fff"></div>
<div class="a" style="left:1912px;top:806px;width:3px;height:47px;background:#333"></div>
<div class="a" style="left:1521px;top:1032px;width:228px;height:3px;background:#333"></div>
<div class="mono" style="left:1527px;top:808.4px;width:385px;overflow:hidden">-------------------------------------------
Дата       10.08.2022
Документ   Сборка C:\Users\User\Desktop\Кресло-пульт дл
-------------------------------------------
Объект N 1
Сборка
Обозначение = 170-04.50.300
Наименование = Кресло-пульт
Материал =
Плотность = 7820 кг/м3
Масса = 142.34212 кг
Автор = Windows User
Организация =
Комментарий =
Тип объекта = Сборочная единица</div>
<div class="a" style="left:1392px;top:946px;font-size:20px;line-height:22px;color:rgba(192,192,198,0.72);white-space:nowrap">Активация Windows</div><div class="a" style="left:1392px;top:972px;font-size:15px;line-height:18px;color:rgba(192,192,198,0.72);white-space:nowrap">Чтобы активировать Windows, перейдите в раздел "Параметры".</div>
<div class="a" style="left:0;top:1040px;width:1920px;height:40px;background:linear-gradient(90deg,#1f2d35 0%,#223840 30%,#21323e 55%,#1e2c42 75%,#1b2848 100%)"></div>
<div class="a" style="left:345px;top:1040px;width:48px;height:40px;background:#3a4852"></div>
<div class="a" style="left:251px;top:1078px;width:40px;height:2px;background:#7ab4e4"></div>
<div class="a" style="left:345px;top:1078px;width:48px;height:2px;background:#7ab4e4"></div>
<div class="a" style="left:398px;top:1078px;width:40px;height:2px;background:#7ab4e4"></div>
<div class="a" style="left:450px;top:1078px;width:37px;height:2px;background:#7ab4e4"></div>
<svg width="17" height="17" style="left:16px;top:1052px"><path d="M0 2.5 L7 1.5 V8 H0 Z M8 1.3 L17 0 V8 H8 Z M0 9 H7 V15.5 L0 14.5 Z M8 9 H17 V17 L8 15.7 Z" fill="#fff"/></svg>
<svg width="25" height="25" style="left:63px;top:1048px"><defs><linearGradient id="edg" x1="0" y1="1" x2="1" y2="0"><stop offset="0" stop-color="#0c59a8"/><stop offset="0.6" stop-color="#1e9ad8"/><stop offset="1" stop-color="#5fd068"/></linearGradient></defs><circle cx="12.5" cy="12.5" r="12" fill="url(#edg)"/><path d="M6 15 Q6 9 12 9 Q17 9 17 13 Q17 15 14 15 Q10 15 9 13" fill="none" stroke="#1f2d35" stroke-width="3"/></svg>
<svg width="24" height="24" style="left:112px;top:1048px"><path d="M8 6 V3 C8 0 16 0 16 3 V6" fill="none" stroke="#2a8ae0" stroke-width="2"/><rect x="1" y="6" width="22" height="17" rx="2" fill="#f2f2f2"/><rect x="7" y="10" width="4.5" height="4.5" fill="#f25022"/><rect x="12.5" y="10" width="4.5" height="4.5" fill="#7fba00"/><rect x="7" y="15.5" width="4.5" height="4.5" fill="#00a4ef"/><rect x="12.5" y="15.5" width="4.5" height="4.5" fill="#ffb900"/></svg>
<svg width="25" height="22" style="left:161px;top:1049px"><path d="M0 8 L12.5 0 L25 8 V22 H0 Z" fill="#1a78d0"/><path d="M0 8 L12.5 16 L25 8 V22 H0 Z" fill="#48a8f0"/></svg>
<svg width="18" height="24" style="left:213px;top:1048px"><rect width="18" height="24" rx="1.5" fill="#5a6a78"/><rect x="2" y="2" width="14" height="5" fill="#48c8f0"/><rect x="2.0" y="9.0" width="3.6" height="2.8" fill="#d8d8d8"/><rect x="2.0" y="12.8" width="3.6" height="2.8" fill="#d8d8d8"/><rect x="2.0" y="16.6" width="3.6" height="2.8" fill="#d8d8d8"/><rect x="2.0" y="20.4" width="3.6" height="2.8" fill="#d8d8d8"/><rect x="6.8" y="9.0" width="3.6" height="2.8" fill="#d8d8d8"/><rect x="6.8" y="12.8" width="3.6" height="2.8" fill="#d8d8d8"/><rect x="6.8" y="16.6" width="3.6" height="2.8" fill="#d8d8d8"/><rect x="6.8" y="20.4" width="3.6" height="2.8" fill="#d8d8d8"/><rect x="11.6" y="9.0" width="3.6" height="2.8" fill="#d8d8d8"/><rect x="11.6" y="12.8" width="3.6" height="2.8" fill="#d8d8d8"/><rect x="11.6" y="16.6" width="3.6" height="2.8" fill="#d8d8d8"/><rect x="11.6" y="20.4" width="3.6" height="2.8" fill="#d8d8d8"/><rect x="11.6" y="16.6" width="3.6" height="6.6" fill="#1a4a90"/></svg>
<svg width="25" height="25" style="left:259px;top:1048px"><circle cx="12.5" cy="12.5" r="12" fill="#2a8a78"/><circle cx="12.5" cy="12.5" r="10" fill="#f4f8f6"/><path d="M8 5 V18 H19" fill="none" stroke="#2a8a78" stroke-width="2.5"/><path d="M11.5 5 V14.5 H19" fill="none" stroke="#2a8a78" stroke-width="1.5"/></svg>
<svg width="24" height="24" style="left:308px;top:1048px"><circle cx="12" cy="12" r="11.5" fill="#f0f0f0"/><path d="M6 5 L12 13 V20 M18 5 L12 13" fill="none" stroke="#e21818" stroke-width="3"/></svg>
<svg width="24" height="24" style="left:357px;top:1048px"><rect x="0.5" y="0.5" width="23" height="23" fill="#123a50" stroke="#30a8e0" stroke-width="1"/><circle cx="12" cy="12" r="8.5" fill="none" stroke="#30a8e0" stroke-width="1.6"/><path d="M9 6 V18 M9 12.5 L15 6.5 M10.5 11 L15.5 17.5" fill="none" stroke="#30a8e0" stroke-width="1.6"/></svg>
<svg width="24" height="22" style="left:406px;top:1049px"><path d="M0 3 H9 L11 5 H24 V21 H0 Z" fill="#f0c030"/><path d="M0 8 H24 V21 H0 Z" fill="#fcd860"/><rect x="7" y="14" width="10" height="7" fill="#1a78d0"/><rect x="9" y="16" width="6" height="5" fill="#fcd860"/></svg>
<svg width="25" height="24" style="left:454px;top:1048px"><path d="M2 14 C0 5 12 1 20 5 C24 8 22 13 17 12 C14 12 14 16 12 19 C9 23 3 21 2 14 Z" fill="#e8eef4"/><circle cx="7" cy="9" r="2" fill="#e04040"/><circle cx="12" cy="6" r="2" fill="#40a040"/><circle cx="17" cy="7" r="1.8" fill="#4070e0"/><circle cx="6" cy="15" r="2" fill="#e0c020"/><path d="M24 1 L13 17" stroke="#d8a040" stroke-width="2.5"/></svg>
<svg width="12" height="7" style="left:1675px;top:1057px"><path d="M0.5 6.5 L6 1 L11.5 6.5" fill="none" stroke="#fff" stroke-width="1.2"/></svg>
<svg width="12" height="17" style="left:1700px;top:1052px"><path d="M2 3 C4 1 8 1 10 3 M2 14 C4 16 8 16 10 14" fill="none" stroke="#fff" stroke-width="1"/><rect x="0.5" y="5.5" width="8" height="6" fill="none" stroke="#fff"/><path d="M8.5 7.5 L11.5 6 V11 L8.5 9.5" fill="none" stroke="#fff"/></svg>
<svg width="17" height="14" style="left:1721px;top:1053px"><rect x="4.5" y="1.5" width="12" height="9" fill="none" stroke="#fff"/><rect x="0.5" y="0.5" width="5" height="4" fill="#1c2b44" stroke="#fff"/><path d="M1 4 V13 M10.5 10.5 V13 M7 13 H14" fill="none" stroke="#fff"/></svg>
<svg width="15" height="13" style="left:1745px;top:1054px"><path d="M0.5 4 H3 L7 0.5 V12.5 L3 9 H0.5 Z" fill="none" stroke="#fff"/><path d="M9 4 L14 9 M14 4 L9 9" stroke="#fff"/></svg>
<div class="a" style="left:1772px;top:1053px;font-size:12px;line-height:14px;color:#fff">РУС</div>
<div class="a" style="left:1800px;top:1044px;width:68px;text-align:center;font-size:12px;line-height:14px;color:#fff">14:20</div>
<div class="a" style="left:1800px;top:1062px;width:68px;text-align:center;font-size:12px;line-height:14px;color:#fff">10.08.2022</div>
<svg width="22" height="22" style="left:1879px;top:1052px"><path d="M0.5 0.5 H16 V11 H6 L3 14 V11 H0.5 Z" fill="#fff"/><path d="M3 3.5 H13 M3 6 H13 M3 8.5 H10" stroke="#1c2b44" stroke-width="1"/><circle cx="15.5" cy="15" r="6.5" fill="#3a3a3a" stroke="#888" stroke-width="1"/><text x="12.3" y="19" font-size="10" fill="#fff" font-family="Liberation Sans">2</text></svg>
<div class="a" style="left:1915px;top:1040px;width:1px;height:40px;background:#56606a"></div>
</body></html>
